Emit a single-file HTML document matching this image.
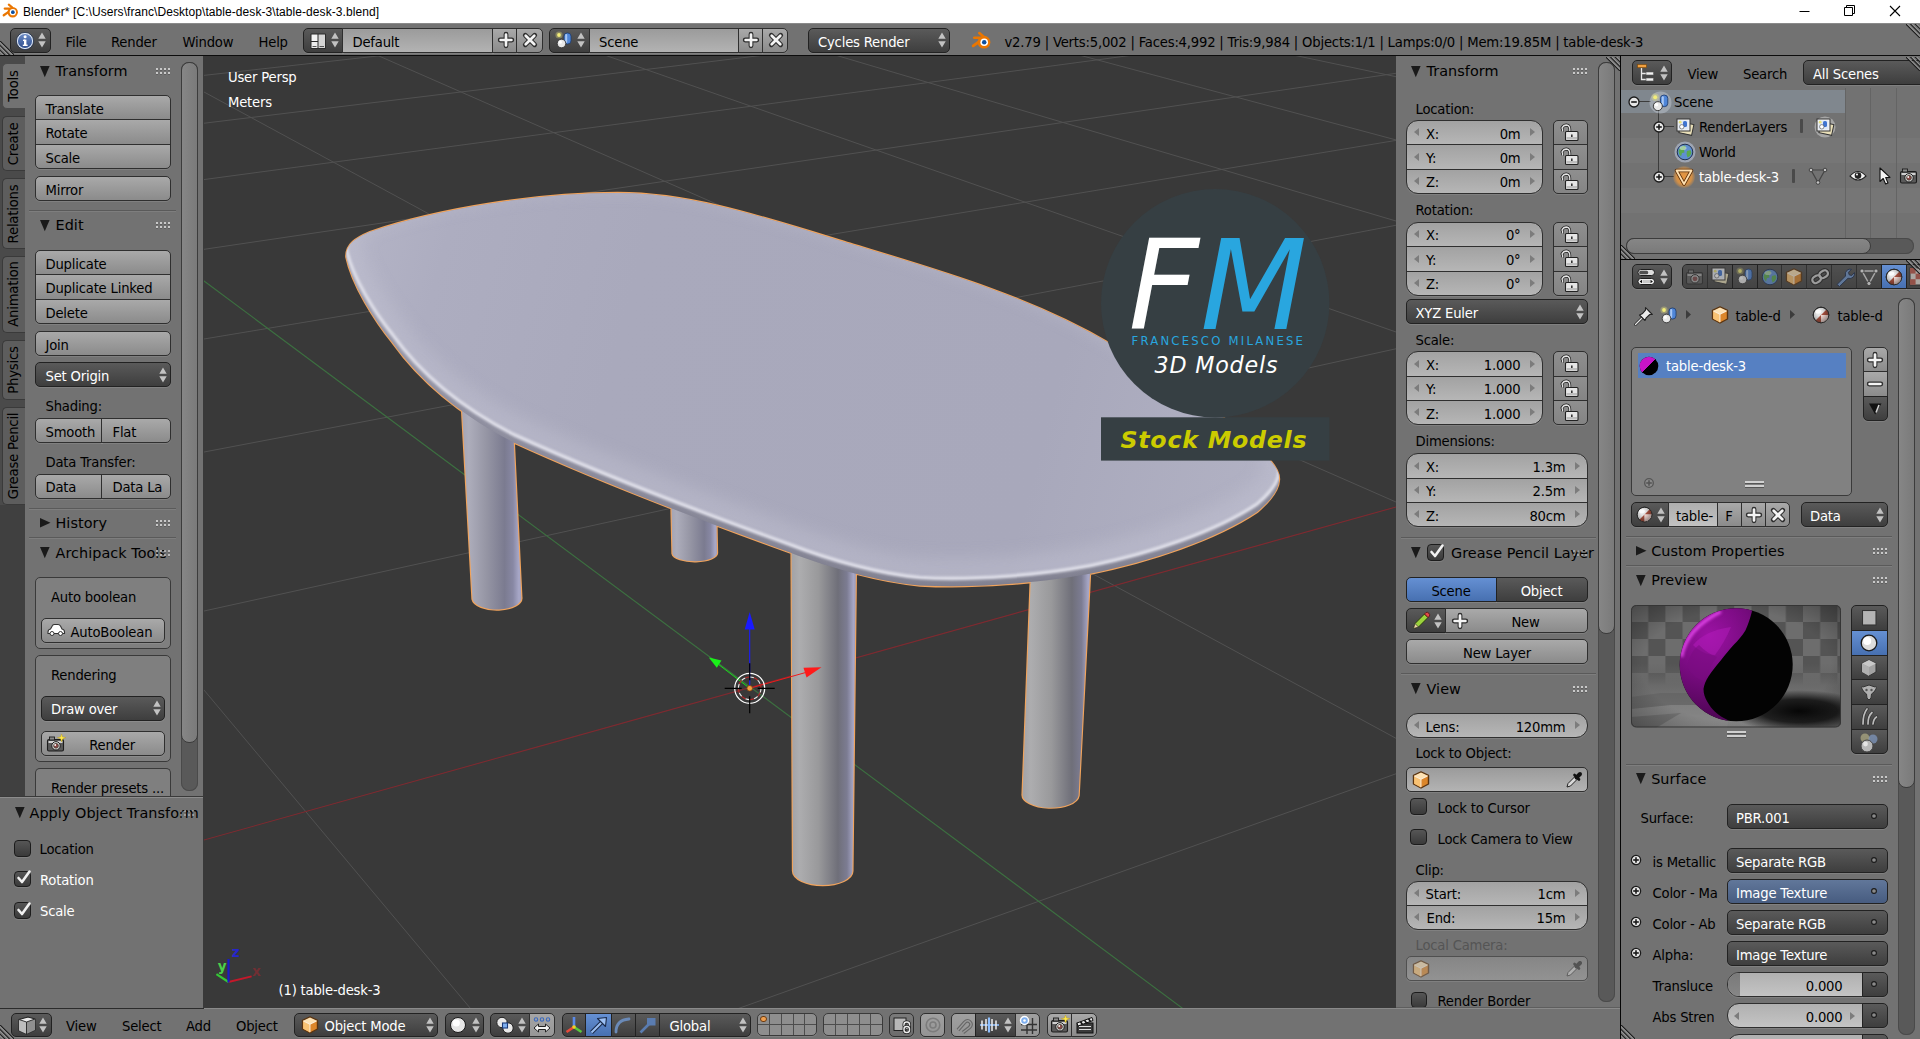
<!DOCTYPE html>
<html><head><meta charset="utf-8"><title>Blender</title><style>
html,body{margin:0;padding:0}
html{overflow:hidden;width:1920px;height:1039px;background:#727272}
body{width:1920px;height:1039px;position:relative;overflow:hidden;background:#727272;
 font-family:"DejaVu Sans","Liberation Sans",sans-serif;font-size:13.2px;color:#000}
.a{position:absolute;box-sizing:border-box}
.t{position:absolute;white-space:nowrap;letter-spacing:-0.2px}
.tool{background:linear-gradient(#a9a9a9,#8b8b8b);border:1px solid #2f2f2f;box-shadow:0 1px 0 rgba(255,255,255,.10)}
.menu{background:linear-gradient(#5a5a5a,#3e3e3e);border:1px solid #222;box-shadow:0 1px 0 rgba(255,255,255,.10)}
.menub{background:linear-gradient(#61779a,#475c80);border:1px solid #222;box-shadow:0 1px 0 rgba(255,255,255,.10)}
.num{background:linear-gradient(#a2a2a2,#b6b6b6);border:1px solid #2f2f2f;box-shadow:0 1px 0 rgba(255,255,255,.10)}
.txt{background:linear-gradient(#9b9b9b,#b3b3b3);border:1px solid #2f2f2f;box-shadow:0 1px 0 rgba(255,255,255,.10)}
.sel{background:linear-gradient(#6590d3,#4770b1);border:1px solid #222;box-shadow:0 1px 0 rgba(255,255,255,.10)}
.chk{background:linear-gradient(#565656,#3a3a3a);border:1px solid #1c1c1c;border-radius:4px;box-shadow:0 1px 0 rgba(255,255,255,.10)}
.bx{background:#7f7f7f;border:1px solid #3a3a3a;border-radius:5px}
.sbt{background:#595959;border-radius:8px;box-shadow:inset 0 0 0 1px #4a4a4a}
.sbh{background:linear-gradient(90deg,#868686,#7a7a7a);border:1px solid #3c3c3c;border-radius:8px}
.sbv{background:linear-gradient(#868686,#7a7a7a);border:1px solid #3c3c3c;border-radius:8px}
</style></head>
<body>
<div class="a " style="left:0px;top:0px;width:1920px;height:23px;background:#fff;"></div>
<svg class="a" style="left:1.5px;top:3px;" width="16.56" height="15.18" viewBox="0 0 16.56 15.18"><g transform="scale(0.92)"><g stroke="#ea7600" stroke-linecap="round" fill="none"><path d="M11 4.8 L7.4 1.8" stroke-width="2.3"/><path d="M9.5 6.1 H2.9" stroke-width="2.3"/><path d="M7.2 9.6 L1.9 13.3" stroke-width="2.5"/></g><circle cx="11.6" cy="10" r="5.7" fill="#ea7600"/><circle cx="11.8" cy="10" r="3.4" fill="#fff"/><circle cx="11.8" cy="10" r="2" fill="#0d4f9e"/></g></svg>
<span class="t" style="left:23px;top:6.45px;font-size:12px;line-height:12px;color:#000;font-family:'Liberation Sans',sans-serif;letter-spacing:0.07px;">Blender* [C:\Users\franc\Desktop\table-desk-3\table-desk-3.blend]</span>
<svg class="a" style="left:1780px;top:0px;" width="140" height="23" viewBox="0 0 140 23"><path d="M19.5 11.5 H29.5" stroke="#000" stroke-width="1" fill="none"/><path d="M64.5 7.5 H72.5 V15.5 H64.5Z M66.5 7.5 V5.5 H74.5 V13.5 H72.5" stroke="#000" stroke-width="1" fill="none"/><path d="M110 6 L120 16 M120 6 L110 16" stroke="#000" stroke-width="1.1" fill="none"/></svg>
<div class="a " style="left:0px;top:56px;width:203px;height:741px;background:#727272;"></div>
<div class="a " style="left:0px;top:56px;width:25px;height:741px;background:#4a4a4a;"></div>
<div class="a " style="left:0px;top:505px;width:25px;height:292px;background:#404040;"></div>
<div class="a " style="left:2px;top:63px;width:23px;height:46px;background:#727272;border:1px solid #4a4a4a;border-right:none;border-radius:5px 0 0 5px;"></div>
<span class="t" style="left:-86px;top:79px;width:200px;text-align:center;font-size:13.2px;line-height:14px;transform:rotate(-90deg);color:#000;">Tools</span>
<div class="a " style="left:2px;top:116px;width:23px;height:55px;background:#5d5d5d;border:1px solid #3a3a3a;border-right:none;border-radius:5px 0 0 5px;"></div>
<span class="t" style="left:-86px;top:136.5px;width:200px;text-align:center;font-size:13.2px;line-height:14px;transform:rotate(-90deg);color:#000;">Create</span>
<div class="a " style="left:2px;top:178px;width:23px;height:71px;background:#5d5d5d;border:1px solid #3a3a3a;border-right:none;border-radius:5px 0 0 5px;"></div>
<span class="t" style="left:-86px;top:206.5px;width:200px;text-align:center;font-size:13.2px;line-height:14px;transform:rotate(-90deg);color:#000;">Relations</span>
<div class="a " style="left:2px;top:256px;width:23px;height:77px;background:#5d5d5d;border:1px solid #3a3a3a;border-right:none;border-radius:5px 0 0 5px;"></div>
<span class="t" style="left:-86px;top:287.25px;width:200px;text-align:center;font-size:13.2px;line-height:14px;transform:rotate(-90deg);color:#000;">Animation</span>
<div class="a " style="left:2px;top:340px;width:23px;height:60px;background:#5d5d5d;border:1px solid #3a3a3a;border-right:none;border-radius:5px 0 0 5px;"></div>
<span class="t" style="left:-86px;top:363px;width:200px;text-align:center;font-size:13.2px;line-height:14px;transform:rotate(-90deg);color:#000;">Physics</span>
<div class="a " style="left:2px;top:407px;width:23px;height:98px;background:#5d5d5d;border:1px solid #3a3a3a;border-right:none;border-radius:5px 0 0 5px;"></div>
<span class="t" style="left:-86px;top:449.25px;width:200px;text-align:center;font-size:13.2px;line-height:14px;transform:rotate(-90deg);color:#000;">Grease Pencil</span>
<div class="a sbt" style="left:181px;top:62px;width:17px;height:729px;"></div>
<div class="a sbh" style="left:181px;top:62px;width:17px;height:681px;"></div>
<svg class="a" style="left:40px;top:65.5px;" width="10" height="12" viewBox="0 0 10 12"><path d="M0 0 L9.6 0 L4.8 11.3Z" fill="#1a1a1a"/></svg>
<span class="t" style="left:55.5px;top:64.42px;font-size:14.4px;line-height:14.4px;color:#000;letter-spacing:.05px;">Transform</span>
<svg class="a" style="left:155.5px;top:68px;" width="15" height="7" viewBox="0 0 15 7"><rect x="0" y="0" width="2" height="2" fill="#c9c9c9"/><rect x="0" y="2" width="2" height="1" fill="#4a4a4a" opacity=".5"/><rect x="0" y="4" width="2" height="2" fill="#c9c9c9"/><rect x="0" y="6" width="2" height="1" fill="#4a4a4a" opacity=".5"/><rect x="4" y="0" width="2" height="2" fill="#c9c9c9"/><rect x="4" y="2" width="2" height="1" fill="#4a4a4a" opacity=".5"/><rect x="4" y="4" width="2" height="2" fill="#c9c9c9"/><rect x="4" y="6" width="2" height="1" fill="#4a4a4a" opacity=".5"/><rect x="8" y="0" width="2" height="2" fill="#c9c9c9"/><rect x="8" y="2" width="2" height="1" fill="#4a4a4a" opacity=".5"/><rect x="8" y="4" width="2" height="2" fill="#c9c9c9"/><rect x="8" y="6" width="2" height="1" fill="#4a4a4a" opacity=".5"/><rect x="12" y="0" width="2" height="2" fill="#c9c9c9"/><rect x="12" y="2" width="2" height="1" fill="#4a4a4a" opacity=".5"/><rect x="12" y="4" width="2" height="2" fill="#c9c9c9"/><rect x="12" y="6" width="2" height="1" fill="#4a4a4a" opacity=".5"/></svg>
<div class="a tool" style="left:35px;top:95px;width:136px;height:25px;border-radius:5px 5px 0 0;"></div>
<span class="t" style="left:45.5px;top:102.88px;font-size:13.2px;line-height:13.2px;color:#000;">Translate</span>
<div class="a tool" style="left:35px;top:119px;width:136px;height:26px;border-radius:0;"></div>
<span class="t" style="left:45.5px;top:127.13px;font-size:13.2px;line-height:13.2px;color:#000;">Rotate</span>
<div class="a tool" style="left:35px;top:144px;width:136px;height:25px;border-radius:0 0 5px 5px;"></div>
<span class="t" style="left:45.5px;top:151.63px;font-size:13.2px;line-height:13.2px;color:#000;">Scale</span>
<div class="a tool" style="left:35px;top:176px;width:136px;height:25px;border-radius:5px;"></div>
<span class="t" style="left:45.5px;top:183.88px;font-size:13.2px;line-height:13.2px;color:#000;">Mirror</span>
<div class="a " style="left:29px;top:210px;width:147px;height:1px;background:#5a5a5a;box-shadow:0 1px 0 #7e7e7e;"></div>
<svg class="a" style="left:40px;top:219.5px;" width="10" height="12" viewBox="0 0 10 12"><path d="M0 0 L9.6 0 L4.8 11.3Z" fill="#1a1a1a"/></svg>
<span class="t" style="left:55.5px;top:218.42px;font-size:14.4px;line-height:14.4px;color:#000;letter-spacing:.05px;">Edit</span>
<svg class="a" style="left:155.5px;top:222px;" width="15" height="7" viewBox="0 0 15 7"><rect x="0" y="0" width="2" height="2" fill="#c9c9c9"/><rect x="0" y="2" width="2" height="1" fill="#4a4a4a" opacity=".5"/><rect x="0" y="4" width="2" height="2" fill="#c9c9c9"/><rect x="0" y="6" width="2" height="1" fill="#4a4a4a" opacity=".5"/><rect x="4" y="0" width="2" height="2" fill="#c9c9c9"/><rect x="4" y="2" width="2" height="1" fill="#4a4a4a" opacity=".5"/><rect x="4" y="4" width="2" height="2" fill="#c9c9c9"/><rect x="4" y="6" width="2" height="1" fill="#4a4a4a" opacity=".5"/><rect x="8" y="0" width="2" height="2" fill="#c9c9c9"/><rect x="8" y="2" width="2" height="1" fill="#4a4a4a" opacity=".5"/><rect x="8" y="4" width="2" height="2" fill="#c9c9c9"/><rect x="8" y="6" width="2" height="1" fill="#4a4a4a" opacity=".5"/><rect x="12" y="0" width="2" height="2" fill="#c9c9c9"/><rect x="12" y="2" width="2" height="1" fill="#4a4a4a" opacity=".5"/><rect x="12" y="4" width="2" height="2" fill="#c9c9c9"/><rect x="12" y="6" width="2" height="1" fill="#4a4a4a" opacity=".5"/></svg>
<div class="a tool" style="left:35px;top:250px;width:136px;height:25px;border-radius:5px 5px 0 0;"></div>
<span class="t" style="left:45.5px;top:257.88px;font-size:13.2px;line-height:13.2px;color:#000;">Duplicate</span>
<div class="a tool" style="left:35px;top:274px;width:136px;height:26px;border-radius:0;"></div>
<span class="t" style="left:45.5px;top:282.13px;font-size:13.2px;line-height:13.2px;color:#000;">Duplicate Linked</span>
<div class="a tool" style="left:35px;top:299px;width:136px;height:25px;border-radius:0 0 5px 5px;"></div>
<span class="t" style="left:45.5px;top:306.63px;font-size:13.2px;line-height:13.2px;color:#000;">Delete</span>
<div class="a tool" style="left:35px;top:331px;width:136px;height:25px;border-radius:5px;"></div>
<span class="t" style="left:45.5px;top:338.63px;font-size:13.2px;line-height:13.2px;color:#000;">Join</span>
<div class="a menu" style="left:35px;top:362px;width:136px;height:25px;border-radius:5px;"></div>
<span class="t" style="left:45.5px;top:369.88px;font-size:13.2px;line-height:13.2px;color:#fff;">Set Origin</span>
<svg class="a" style="left:159px;top:366.7px;" width="8" height="16" viewBox="0 0 8 16"><path d="M4 .6 L7.7 6.8 L.3 6.8Z M4 15.4 L7.7 9.2 L.3 9.2Z" fill="#c2c2c2"/></svg>
<span class="t" style="left:45.5px;top:400.43px;font-size:13.2px;line-height:13.2px;color:#000;">Shading:</span>
<div class="a tool" style="left:35px;top:418px;width:68px;height:25px;border-radius:5px 0 0 5px;"></div>
<span class="t" style="left:45.5px;top:425.88px;font-size:13.2px;line-height:13.2px;color:#000;">Smooth</span>
<div class="a tool" style="left:101px;top:418px;width:70px;height:25px;border-radius:0 5px 5px 0;"></div>
<span class="t" style="left:112.5px;top:425.88px;font-size:13.2px;line-height:13.2px;color:#000;">Flat</span>
<span class="t" style="left:45.5px;top:456.43px;font-size:13.2px;line-height:13.2px;color:#000;">Data Transfer:</span>
<div class="a tool" style="left:35px;top:474px;width:68px;height:25px;border-radius:5px 0 0 5px;"></div>
<span class="t" style="left:45.5px;top:481.38px;font-size:13.2px;line-height:13.2px;color:#000;">Data</span>
<div class="a tool" style="left:101px;top:474px;width:70px;height:25px;border-radius:0 5px 5px 0;"></div>
<span class="t" style="left:112.5px;top:481.38px;font-size:13.2px;line-height:13.2px;color:#000;">Data La</span>
<div class="a " style="left:29px;top:508px;width:147px;height:1px;background:#5a5a5a;box-shadow:0 1px 0 #7e7e7e;"></div>
<svg class="a" style="left:40px;top:517.8px;" width="11" height="10" viewBox="0 0 11 10"><path d="M0 0 L10.5 4.7 L0 9.4Z" fill="#1a1a1a"/></svg>
<span class="t" style="left:55.5px;top:516.42px;font-size:14.4px;line-height:14.4px;color:#000;letter-spacing:.05px;">History</span>
<svg class="a" style="left:155.5px;top:520px;" width="15" height="7" viewBox="0 0 15 7"><rect x="0" y="0" width="2" height="2" fill="#c9c9c9"/><rect x="0" y="2" width="2" height="1" fill="#4a4a4a" opacity=".5"/><rect x="0" y="4" width="2" height="2" fill="#c9c9c9"/><rect x="0" y="6" width="2" height="1" fill="#4a4a4a" opacity=".5"/><rect x="4" y="0" width="2" height="2" fill="#c9c9c9"/><rect x="4" y="2" width="2" height="1" fill="#4a4a4a" opacity=".5"/><rect x="4" y="4" width="2" height="2" fill="#c9c9c9"/><rect x="4" y="6" width="2" height="1" fill="#4a4a4a" opacity=".5"/><rect x="8" y="0" width="2" height="2" fill="#c9c9c9"/><rect x="8" y="2" width="2" height="1" fill="#4a4a4a" opacity=".5"/><rect x="8" y="4" width="2" height="2" fill="#c9c9c9"/><rect x="8" y="6" width="2" height="1" fill="#4a4a4a" opacity=".5"/><rect x="12" y="0" width="2" height="2" fill="#c9c9c9"/><rect x="12" y="2" width="2" height="1" fill="#4a4a4a" opacity=".5"/><rect x="12" y="4" width="2" height="2" fill="#c9c9c9"/><rect x="12" y="6" width="2" height="1" fill="#4a4a4a" opacity=".5"/></svg>
<div class="a " style="left:29px;top:537px;width:147px;height:1px;background:#5a5a5a;box-shadow:0 1px 0 #7e7e7e;"></div>
<svg class="a" style="left:40px;top:547px;" width="10" height="12" viewBox="0 0 10 12"><path d="M0 0 L9.6 0 L4.8 11.3Z" fill="#1a1a1a"/></svg>
<span class="t" style="left:55.5px;top:545.92px;font-size:14.4px;line-height:14.4px;color:#000;letter-spacing:.05px;">Archipack Tools</span>
<div class="a " style="left:166px;top:545px;width:12px;height:18px;background:#727272;"></div>
<svg class="a" style="left:155.5px;top:549.5px;opacity:0.8" width="15" height="7" viewBox="0 0 15 7"><rect x="0" y="0" width="2" height="2" fill="#c9c9c9"/><rect x="0" y="2" width="2" height="1" fill="#4a4a4a" opacity=".5"/><rect x="0" y="4" width="2" height="2" fill="#c9c9c9"/><rect x="0" y="6" width="2" height="1" fill="#4a4a4a" opacity=".5"/><rect x="4" y="0" width="2" height="2" fill="#c9c9c9"/><rect x="4" y="2" width="2" height="1" fill="#4a4a4a" opacity=".5"/><rect x="4" y="4" width="2" height="2" fill="#c9c9c9"/><rect x="4" y="6" width="2" height="1" fill="#4a4a4a" opacity=".5"/><rect x="8" y="0" width="2" height="2" fill="#c9c9c9"/><rect x="8" y="2" width="2" height="1" fill="#4a4a4a" opacity=".5"/><rect x="8" y="4" width="2" height="2" fill="#c9c9c9"/><rect x="8" y="6" width="2" height="1" fill="#4a4a4a" opacity=".5"/><rect x="12" y="0" width="2" height="2" fill="#c9c9c9"/><rect x="12" y="2" width="2" height="1" fill="#4a4a4a" opacity=".5"/><rect x="12" y="4" width="2" height="2" fill="#c9c9c9"/><rect x="12" y="6" width="2" height="1" fill="#4a4a4a" opacity=".5"/></svg>
<div class="a bx" style="left:35px;top:577px;width:136px;height:72px;"></div>
<span class="t" style="left:51px;top:591.13px;font-size:13.2px;line-height:13.2px;color:#000;">Auto boolean</span>
<div class="a tool" style="left:41px;top:618px;width:124px;height:25px;border-radius:5px;"></div>
<span class="t" style="left:70.5px;top:625.73px;font-size:13.2px;line-height:13.2px;color:#000;">AutoBoolean</span>
<svg class="a" style="left:46px;top:622px;" width="20" height="16" viewBox="0 0 20 16"><path d="M2 10 Q2 7.5 4.5 7 L6.5 3.5 Q7 2.5 8.5 2.5 L12 2.5 Q13.5 2.5 14.5 4 L16 7 Q18.5 7.5 18.5 10 L18.5 11.5 L2 11.5Z" fill="#fff" stroke="#333" stroke-width="1.1"/><circle cx="6" cy="11.5" r="2" fill="#fff" stroke="#333" stroke-width="1"/><circle cx="14.5" cy="11.5" r="2" fill="#fff" stroke="#333" stroke-width="1"/></svg>
<div class="a bx" style="left:35px;top:655px;width:136px;height:107px;"></div>
<span class="t" style="left:51px;top:669.43px;font-size:13.2px;line-height:13.2px;color:#000;">Rendering</span>
<div class="a menu" style="left:41px;top:696px;width:124px;height:25px;border-radius:5px;"></div>
<span class="t" style="left:51px;top:703.38px;font-size:13.2px;line-height:13.2px;color:#fff;">Draw over</span>
<svg class="a" style="left:153px;top:700.2px;" width="8" height="16" viewBox="0 0 8 16"><path d="M4 .6 L7.7 6.8 L.3 6.8Z M4 15.4 L7.7 9.2 L.3 9.2Z" fill="#c2c2c2"/></svg>
<div class="a tool" style="left:41px;top:731px;width:124px;height:25px;border-radius:5px;"></div>
<span class="t" style="left:-88px;width:400px;text-align:center;top:738.73px;font-size:13.2px;line-height:13.2px;color:#000;">Render</span>
<svg class="a" style="left:46px;top:733.5px;" width="20" height="19" viewBox="0 0 20 19"><rect x="1.5" y="5.5" width="16" height="11.5" rx="1.5" fill="#5a5a5a" stroke="#1c1c1c" stroke-width="1.1"/><rect x="3.5" y="3" width="5" height="3" fill="#8a8a8a" stroke="#1c1c1c" stroke-width=".9"/><rect x="2.5" y="7" width="14" height="2" fill="#d0d0d0"/><circle cx="10" cy="11.8" r="4.2" fill="#d8d8d8" stroke="#1c1c1c" stroke-width="1"/><circle cx="10" cy="11.8" r="2.4" fill="#8c4a4a" stroke="#332" stroke-width=".7"/><circle cx="9.2" cy="11" r=".9" fill="#fff"/><path d="M15.5 0 L16.6 3 L19.8 3.6 L16.8 4.8 L15.6 8 L14.6 4.8 L11.4 3.7 L14.5 3Z" fill="#ffe94a" stroke="#b89a10" stroke-width=".4"/></svg>
<div class="a bx" style="left:35px;top:768px;width:136px;height:29px;border-radius:5px 5px 0 0;border-bottom:none;"></div>
<span class="t" style="left:51px;top:781.93px;font-size:13.2px;line-height:13.2px;color:#000;">Render presets ...</span>
<div class="a " style="left:0px;top:797px;width:203px;height:212px;background:#727272;border-top:1px solid #8c8c8c;"></div>
<div class="a " style="left:0px;top:796px;width:203px;height:1px;background:#3a3a3a;"></div>
<svg class="a" style="left:14.5px;top:807px;" width="10" height="12" viewBox="0 0 10 12"><path d="M0 0 L9.6 0 L4.8 11.3Z" fill="#1a1a1a"/></svg>
<span class="t" style="left:29.5px;top:805.92px;font-size:14.4px;line-height:14.4px;color:#000;letter-spacing:.05px;">Apply Object Transform</span>
<svg class="a" style="left:179.5px;top:809.5px;opacity:0.5" width="15" height="7" viewBox="0 0 15 7"><rect x="0" y="0" width="2" height="2" fill="#c9c9c9"/><rect x="0" y="2" width="2" height="1" fill="#4a4a4a" opacity=".5"/><rect x="0" y="4" width="2" height="2" fill="#c9c9c9"/><rect x="0" y="6" width="2" height="1" fill="#4a4a4a" opacity=".5"/><rect x="4" y="0" width="2" height="2" fill="#c9c9c9"/><rect x="4" y="2" width="2" height="1" fill="#4a4a4a" opacity=".5"/><rect x="4" y="4" width="2" height="2" fill="#c9c9c9"/><rect x="4" y="6" width="2" height="1" fill="#4a4a4a" opacity=".5"/><rect x="8" y="0" width="2" height="2" fill="#c9c9c9"/><rect x="8" y="2" width="2" height="1" fill="#4a4a4a" opacity=".5"/><rect x="8" y="4" width="2" height="2" fill="#c9c9c9"/><rect x="8" y="6" width="2" height="1" fill="#4a4a4a" opacity=".5"/><rect x="12" y="0" width="2" height="2" fill="#c9c9c9"/><rect x="12" y="2" width="2" height="1" fill="#4a4a4a" opacity=".5"/><rect x="12" y="4" width="2" height="2" fill="#c9c9c9"/><rect x="12" y="6" width="2" height="1" fill="#4a4a4a" opacity=".5"/></svg>
<div class="a chk" style="left:14px;top:840px;width:17px;height:17px;"></div>
<span class="t" style="left:39.5px;top:843.43px;font-size:13.2px;line-height:13.2px;color:#000;">Location</span>
<div class="a chk" style="left:14px;top:871px;width:17px;height:16px;"></div>
<svg class="a" style="left:14px;top:867px;" width="20" height="20" viewBox="0 0 20 20"><path d="M4.5 11 L8 15 L15.5 4.5" stroke="#f2f2f2" stroke-width="2.6" fill="none" stroke-linecap="round" stroke-linejoin="round"/></svg>
<span class="t" style="left:40px;top:874.43px;font-size:13.2px;line-height:13.2px;color:#fff;">Rotation</span>
<div class="a chk" style="left:14px;top:902px;width:17px;height:17px;"></div>
<svg class="a" style="left:14px;top:898.5px;" width="20" height="20" viewBox="0 0 20 20"><path d="M4.5 11 L8 15 L15.5 4.5" stroke="#f2f2f2" stroke-width="2.6" fill="none" stroke-linecap="round" stroke-linejoin="round"/></svg>
<span class="t" style="left:40px;top:905.43px;font-size:13.2px;line-height:13.2px;color:#fff;">Scale</span>
<div class="a " style="left:203px;top:56px;width:2px;height:952px;background:#393939;"></div>
<svg class="a" style="left:204px;top:56px" width="1192" height="952" viewBox="204 56 1192 952"><defs><clipPath id="vc"><rect x="204" y="56" width="1192" height="952"/></clipPath><clipPath id="tc"><path d="M346.3 257 C346 244 356 238 370 232 C440 208 540 193 617.5 193 C690 193 760 216 850 243.7 C930 268 1030 296 1110 343.7 C1170 378 1236 421 1270.5 461 C1276 467.5 1279.5 473 1279 480 C1278.5 491 1270 501 1257 512 C1216 539.5 1150 561.5 1091 573.5 C1040 583 975 588.5 920 585.5 C880 582 830 568 790 552.5 C700 520 600 482 513.7 442.5 C470 420 425 388 392.5 342.5 C375 321 352 285 346.3 257Z"/></clipPath><filter id="b2" x="-5%" y="-5%" width="110%" height="110%"><feGaussianBlur stdDeviation="1.3"/></filter><filter id="b8" x="-5%" y="-10%" width="110%" height="120%"><feGaussianBlur stdDeviation="9"/></filter><linearGradient id="lg" x1="0" x2="1" y1="0" y2="0"><stop offset="0" stop-color="#a2a2a6"/><stop offset=".12" stop-color="#adadaf"/><stop offset=".42" stop-color="#99999b"/><stop offset=".72" stop-color="#6f6f79"/><stop offset=".86" stop-color="#7c7c92"/><stop offset=".96" stop-color="#a6a6c6"/><stop offset="1" stop-color="#9c9cb8"/></linearGradient><linearGradient id="lg2" x1="0" x2="1" y1="0" y2="0"><stop offset="0" stop-color="#a4a4b4"/><stop offset=".12" stop-color="#adadbb"/><stop offset=".42" stop-color="#9595a4"/><stop offset=".72" stop-color="#7b7b90"/><stop offset=".86" stop-color="#8888a4"/><stop offset=".96" stop-color="#a8a8c8"/><stop offset="1" stop-color="#9e9ebc"/></linearGradient><linearGradient id="rg" gradientUnits="userSpaceOnUse" x1="0" y1="250" x2="0" y2="590"><stop offset="0" stop-color="#9090a2"/><stop offset="1" stop-color="#727282"/></linearGradient><linearGradient id="tg" gradientUnits="userSpaceOnUse" x1="346" y1="250" x2="1278" y2="500"><stop offset="0" stop-color="#b4b4c6"/><stop offset=".1" stop-color="#adadc0"/><stop offset=".3" stop-color="#a9a9bc"/><stop offset=".75" stop-color="#a8a8bb"/><stop offset="1" stop-color="#b2b2c4"/></linearGradient></defs><g clip-path="url(#vc)"><rect x="204" y="56" width="1192" height="952" fill="#393939"/><path d="M150 81.4 L1450 -63.7 M150 129.8 L1450 -28.3 M150 186.8 L1450 12.6 M150 257.3 L1450 65.3 M150 348.0 L1450 131.4 M150 462.3 L1450 215.0 M150 622.9 L1450 336.9 M150 1218.5 L1450 754.5 M150 62.7 L1450 767.6 M150 -44.4 L1450 525.7 M150 -104.1 L1450 350.9 M150 -147.8 L1450 237.0 M150 -194.0 L1450 154.4 M150 -186.2 L1450 88.1 M150 625.5 L1450 2179.0" stroke="#515151" stroke-width="1" fill="none"/><path d="M150 855.1 L1450 491.9" stroke="#7e2a30" stroke-width="1.1"/><path d="M150 240.9 L1450 1207.1" stroke="#3c7040" stroke-width="1.1"/><path d="M461.5 400 L472.5 599 A24.4 11.5 0 0 0 521.3 597 L513.2 430Z M671.2 495 L672.5 553.5 A22.2 8.3 0 0 0 717 552.5 L716.2 512Z M791.5 540 L793 871 A29.7 14.0 0 0 0 852.4 871 L856 560Z M1031.5 560 L1022.6 794 A28.0 12.9 0 0 0 1078.6 795.6 L1091 555Z M346.3 257 C346 244 356 238 370 232 C440 208 540 193 617.5 193 C690 193 760 216 850 243.7 C930 268 1030 296 1110 343.7 C1170 378 1236 421 1270.5 461 C1276 467.5 1279.5 473 1279 480 C1278.5 491 1270 501 1257 512 C1216 539.5 1150 561.5 1091 573.5 C1040 583 975 588.5 920 585.5 C880 582 830 568 790 552.5 C700 520 600 482 513.7 442.5 C470 420 425 388 392.5 342.5 C375 321 352 285 346.3 257Z" fill="none" stroke="#f0a35c" stroke-width="2.3" stroke-linejoin="round"/><path d="M461.5 400 L472.5 599 A24.4 11.5 0 0 0 521.3 597 L513.2 430Z" fill="url(#lg2)"/><path d="M671.2 495 L672.5 553.5 A22.2 8.3 0 0 0 717 552.5 L716.2 512Z" fill="url(#lg2)"/><path d="M791.5 540 L793 871 A29.7 14.0 0 0 0 852.4 871 L856 560Z" fill="url(#lg)"/><path d="M1031.5 560 L1022.6 794 A28.0 12.9 0 0 0 1078.6 795.6 L1091 555Z" fill="url(#lg)"/><path d="M346.3 257 C346 244 356 238 370 232 C440 208 540 193 617.5 193 C690 193 760 216 850 243.7 C930 268 1030 296 1110 343.7 C1170 378 1236 421 1270.5 461 C1276 467.5 1279.5 473 1279 480 C1278.5 491 1270 501 1257 512 C1216 539.5 1150 561.5 1091 573.5 C1040 583 975 588.5 920 585.5 C880 582 830 568 790 552.5 C700 520 600 482 513.7 442.5 C470 420 425 388 392.5 342.5 C375 321 352 285 346.3 257Z" fill="url(#rg)"/><g clip-path="url(#tc)"><path d="M346.3 257 C346 244 356 238 370 232 C440 208 540 193 617.5 193 C690 193 760 216 850 243.7 C930 268 1030 296 1110 343.7 C1170 378 1236 421 1270.5 461 C1276 467.5 1279.5 473 1279 480 C1278.5 491 1270 501 1257 512 C1216 539.5 1150 561.5 1091 573.5 C1040 583 975 588.5 920 585.5 C880 582 830 568 790 552.5 C700 520 600 482 513.7 442.5 C470 420 425 388 392.5 342.5 C375 321 352 285 346.3 257Z" transform="translate(0,-7.5)" fill="url(#tg)"/><path d="M346.3 257 C346 244 356 238 370 232 C440 208 540 193 617.5 193 C690 193 760 216 850 243.7 C930 268 1030 296 1110 343.7 C1170 378 1236 421 1270.5 461 C1276 467.5 1279.5 473 1279 480 C1278.5 491 1270 501 1257 512 C1216 539.5 1150 561.5 1091 573.5 C1040 583 975 588.5 920 585.5 C880 582 830 568 790 552.5 C700 520 600 482 513.7 442.5 C470 420 425 388 392.5 342.5 C375 321 352 285 346.3 257Z" transform="translate(0,-15)" fill="none" stroke="#c6c6d6" stroke-width="24" filter="url(#b8)" opacity=".42"/><path d="M346.3 257 C346 244 356 238 370 232 C440 208 540 193 617.5 193 C690 193 760 216 850 243.7 C930 268 1030 296 1110 343.7 C1170 378 1236 421 1270.5 461 C1276 467.5 1279.5 473 1279 480 C1278.5 491 1270 501 1257 512 C1216 539.5 1150 561.5 1091 573.5 C1040 583 975 588.5 920 585.5 C880 582 830 568 790 552.5 C700 520 600 482 513.7 442.5 C470 420 425 388 392.5 342.5 C375 321 352 285 346.3 257Z" transform="translate(0,-8)" fill="none" stroke="#dcdce6" stroke-width="3.6" filter="url(#b2)"/></g><circle cx="1215.2" cy="303.3" r="114.2" fill="#363f43"/><rect x="1101" y="417.3" width="228.4" height="43.3" fill="#363f43"/><g font-family="DejaVu Sans, Liberation Sans, sans-serif"><text x="1128.5" y="329.2" font-size="124.5" font-style="oblique" fill="#fff" textLength="70.5" lengthAdjust="spacingAndGlyphs">F</text><text x="1200.3" y="329.2" font-size="124.5" font-style="oblique" fill="#29a6df" textLength="107" lengthAdjust="spacingAndGlyphs">M</text><text x="1131.5" y="345.3" font-size="11.7" fill="#29a6df" textLength="171.5" lengthAdjust="spacing">FRANCESCO MILANESE</text><text x="1154.5" y="372.5" font-size="22.2" font-style="oblique" fill="#fff" textLength="123" lengthAdjust="spacing">3D Models</text><text x="1120.5" y="447.9" font-size="23.7" font-style="oblique" font-weight="bold" fill="#cccc00" textLength="186" lengthAdjust="spacing">Stock Models</text></g><path d="M749.7 688.3 L749.7 629" stroke="#1a1aff" stroke-width="1.1"/><path d="M744.7 629.5 L749.7 612 L754.7 629.5Z" fill="#1a1aff"/><path d="M749.7 688.3 L805 672.7" stroke="#f01a1a" stroke-width="1"/><path d="M821.5 667.3 L803.5 667.8 L806.5 677.5Z" fill="#ff1a1a"/><path d="M749.7 688.3 L719 664.8" stroke="#1ae01a" stroke-width="1"/><path d="M708.8 657.4 L721.5 660.6 L716.8 667.8Z" fill="#1af01a"/><circle cx="749.7" cy="688.3" r="15" fill="none" stroke="#fff" stroke-width="1.2"/><circle cx="749.7" cy="688.3" r="11.3" fill="none" stroke="#fff" stroke-width="1.1" stroke-dasharray="4.4 4.4" opacity=".9"/><circle cx="749.7" cy="688.3" r="11.3" fill="none" stroke="#b82a2a" stroke-width="1.1" stroke-dasharray="4.4 4.4" stroke-dashoffset="4.4"/><path d="M724.7 688.3 H741.7 M757.7 688.3 H774.7 M749.7 663.3 V680.3 M749.7 696.3 V713.3" stroke="#000" stroke-width="1.2"/><circle cx="749.7" cy="688.3" r="2.8" fill="#f0a040" stroke="#7a3a10" stroke-width=".8"/><path d="M228.5 982 L251.6 976.4" stroke="#c4182a" stroke-width="2"/><path d="M228.5 982 L216.4 974.1" stroke="#34c834" stroke-width="2.2"/><path d="M228.5 982.5 L228.5 959" stroke="#1a1ac8" stroke-width="2.2"/><g font-family="DejaVu Sans, sans-serif" font-size="13.5" font-weight="bold"><text x="252.5" y="975.5" fill="#a02830" opacity=".55">x</text><text x="217.8" y="970.6" fill="#4ad04a">y</text><text x="231.8" y="957.3" fill="#2626cc">z</text></g></g></svg>
<span class="t" style="left:228px;top:71.43px;font-size:13.2px;line-height:13.2px;color:#fff;">User Persp</span>
<span class="t" style="left:228px;top:96.43px;font-size:13.2px;line-height:13.2px;color:#fff;">Meters</span>
<span class="t" style="left:278.5px;top:984.43px;font-size:13.2px;line-height:13.2px;color:#fff;">(1) table-desk-3</span>
<div class="a " style="left:1396px;top:56px;width:224px;height:952px;background:#727272;"></div>
<div class="a " style="left:1396px;top:1007px;width:224px;height:2px;background:#727272;"></div>
<div class="a sbt" style="left:1598px;top:62px;width:17px;height:940px;"></div>
<div class="a sbh" style="left:1598px;top:62px;width:17px;height:572px;"></div>
<svg class="a" style="left:1411px;top:65.5px;" width="10" height="12" viewBox="0 0 10 12"><path d="M0 0 L9.6 0 L4.8 11.3Z" fill="#1a1a1a"/></svg>
<span class="t" style="left:1426.5px;top:64.42px;font-size:14.4px;line-height:14.4px;color:#000;letter-spacing:.05px;">Transform</span>
<svg class="a" style="left:1572.5px;top:68px;" width="15" height="7" viewBox="0 0 15 7"><rect x="0" y="0" width="2" height="2" fill="#c9c9c9"/><rect x="0" y="2" width="2" height="1" fill="#4a4a4a" opacity=".5"/><rect x="0" y="4" width="2" height="2" fill="#c9c9c9"/><rect x="0" y="6" width="2" height="1" fill="#4a4a4a" opacity=".5"/><rect x="4" y="0" width="2" height="2" fill="#c9c9c9"/><rect x="4" y="2" width="2" height="1" fill="#4a4a4a" opacity=".5"/><rect x="4" y="4" width="2" height="2" fill="#c9c9c9"/><rect x="4" y="6" width="2" height="1" fill="#4a4a4a" opacity=".5"/><rect x="8" y="0" width="2" height="2" fill="#c9c9c9"/><rect x="8" y="2" width="2" height="1" fill="#4a4a4a" opacity=".5"/><rect x="8" y="4" width="2" height="2" fill="#c9c9c9"/><rect x="8" y="6" width="2" height="1" fill="#4a4a4a" opacity=".5"/><rect x="12" y="0" width="2" height="2" fill="#c9c9c9"/><rect x="12" y="2" width="2" height="1" fill="#4a4a4a" opacity=".5"/><rect x="12" y="4" width="2" height="2" fill="#c9c9c9"/><rect x="12" y="6" width="2" height="1" fill="#4a4a4a" opacity=".5"/></svg>
<svg class="a" style="left:1606px;top:57px;" width="14" height="14" viewBox="0 0 12 12"><path d="M3 -1 L13 9 M7 -1 L13 5 M-1 -1 L13 13" stroke="#1c1c1c" stroke-width="1.1"/><path d="M4.2 -1 L13 7.8 M.2 -1 L13 11.8 M8.2 -1 L13 3.8" stroke="#979797" stroke-width=".9"/></svg>
<span class="t" style="left:1415.5px;top:102.93px;font-size:13.2px;line-height:13.2px;color:#000;">Location:</span>
<div class="a num" style="left:1406px;top:120px;width:137px;height:25px;border-radius:12px 12px 0 0;"></div>
<span class="t" style="left:1426px;top:127.58px;font-size:13.2px;line-height:13.2px;color:#000;">X:</span>
<span class="t" style="left:1120.5px;width:400px;text-align:right;top:127.58px;font-size:13.2px;line-height:13.2px;color:#000;">0m</span>
<svg class="a" style="left:1413.5px;top:128.45px;" width="5" height="8" viewBox="0 0 5 8"><path d="M5 0 L5 8 L0 4Z" fill="#7c7c7c"/></svg>
<svg class="a" style="left:1530px;top:128.45px;" width="5" height="8" viewBox="0 0 5 8"><path d="M0 0 L0 8 L5 4Z" fill="#7c7c7c"/></svg>
<div class="a num" style="left:1406px;top:144px;width:137px;height:26px;border-radius:0;"></div>
<span class="t" style="left:1426px;top:151.83px;font-size:13.2px;line-height:13.2px;color:#000;">Y:</span>
<span class="t" style="left:1120.5px;width:400px;text-align:right;top:151.83px;font-size:13.2px;line-height:13.2px;color:#000;">0m</span>
<svg class="a" style="left:1413.5px;top:152.7px;" width="5" height="8" viewBox="0 0 5 8"><path d="M5 0 L5 8 L0 4Z" fill="#7c7c7c"/></svg>
<svg class="a" style="left:1530px;top:152.7px;" width="5" height="8" viewBox="0 0 5 8"><path d="M0 0 L0 8 L5 4Z" fill="#7c7c7c"/></svg>
<div class="a num" style="left:1406px;top:169px;width:137px;height:25px;border-radius:0 0 12px 12px;"></div>
<span class="t" style="left:1426px;top:176.33px;font-size:13.2px;line-height:13.2px;color:#000;">Z:</span>
<span class="t" style="left:1120.5px;width:400px;text-align:right;top:176.33px;font-size:13.2px;line-height:13.2px;color:#000;">0m</span>
<svg class="a" style="left:1413.5px;top:177.2px;" width="5" height="8" viewBox="0 0 5 8"><path d="M5 0 L5 8 L0 4Z" fill="#7c7c7c"/></svg>
<svg class="a" style="left:1530px;top:177.2px;" width="5" height="8" viewBox="0 0 5 8"><path d="M0 0 L0 8 L5 4Z" fill="#7c7c7c"/></svg>
<div class="a tool" style="left:1553px;top:120px;width:35px;height:25px;border-radius:5px 5px 0 0;background:linear-gradient(#8f8f8f,#848484);"></div>
<svg class="a" style="left:1559.5px;top:123px;" width="20" height="20" viewBox="0 0 20 20"><path d="M2.5 8.5 Q3 6.5 2 5 Q3.5 2 6.5 2 Q9.5 2.3 9.8 6 V8.5" fill="none" stroke="#222" stroke-width="2.8"/><path d="M2.5 8.5 Q3 6.5 2 5 Q3.5 2 6.5 2 Q9.5 2.3 9.8 6 V8.5" fill="none" stroke="#e4e4e4" stroke-width="1.3"/><rect x="5.5" y="8.5" width="12.5" height="9" rx="1" fill="#e6e6e6" stroke="#222" stroke-width="1.1"/><rect x="11" y="11.5" width="1.6" height="2.8" fill="#333"/><rect x="6.5" y="14" width="10.5" height="2.5" fill="#bdbdbd"/></svg>
<div class="a tool" style="left:1553px;top:144px;width:35px;height:26px;border-radius:0;background:linear-gradient(#8f8f8f,#848484);"></div>
<svg class="a" style="left:1559.5px;top:147px;" width="20" height="20" viewBox="0 0 20 20"><path d="M2.5 8.5 Q3 6.5 2 5 Q3.5 2 6.5 2 Q9.5 2.3 9.8 6 V8.5" fill="none" stroke="#222" stroke-width="2.8"/><path d="M2.5 8.5 Q3 6.5 2 5 Q3.5 2 6.5 2 Q9.5 2.3 9.8 6 V8.5" fill="none" stroke="#e4e4e4" stroke-width="1.3"/><rect x="5.5" y="8.5" width="12.5" height="9" rx="1" fill="#e6e6e6" stroke="#222" stroke-width="1.1"/><rect x="11" y="11.5" width="1.6" height="2.8" fill="#333"/><rect x="6.5" y="14" width="10.5" height="2.5" fill="#bdbdbd"/></svg>
<div class="a tool" style="left:1553px;top:169px;width:35px;height:25px;border-radius:0 0 5px 5px;background:linear-gradient(#8f8f8f,#848484);"></div>
<svg class="a" style="left:1559.5px;top:171.5px;" width="20" height="20" viewBox="0 0 20 20"><path d="M2.5 8.5 Q3 6.5 2 5 Q3.5 2 6.5 2 Q9.5 2.3 9.8 6 V8.5" fill="none" stroke="#222" stroke-width="2.8"/><path d="M2.5 8.5 Q3 6.5 2 5 Q3.5 2 6.5 2 Q9.5 2.3 9.8 6 V8.5" fill="none" stroke="#e4e4e4" stroke-width="1.3"/><rect x="5.5" y="8.5" width="12.5" height="9" rx="1" fill="#e6e6e6" stroke="#222" stroke-width="1.1"/><rect x="11" y="11.5" width="1.6" height="2.8" fill="#333"/><rect x="6.5" y="14" width="10.5" height="2.5" fill="#bdbdbd"/></svg>
<span class="t" style="left:1415.5px;top:204.43px;font-size:13.2px;line-height:13.2px;color:#000;">Rotation:</span>
<div class="a num" style="left:1406px;top:222px;width:137px;height:25px;border-radius:12px 12px 0 0;"></div>
<span class="t" style="left:1426px;top:229.33px;font-size:13.2px;line-height:13.2px;color:#000;">X:</span>
<span class="t" style="left:1120.5px;width:400px;text-align:right;top:229.33px;font-size:13.2px;line-height:13.2px;color:#000;">0°</span>
<svg class="a" style="left:1413.5px;top:230.2px;" width="5" height="8" viewBox="0 0 5 8"><path d="M5 0 L5 8 L0 4Z" fill="#7c7c7c"/></svg>
<svg class="a" style="left:1530px;top:230.2px;" width="5" height="8" viewBox="0 0 5 8"><path d="M0 0 L0 8 L5 4Z" fill="#7c7c7c"/></svg>
<div class="a num" style="left:1406px;top:246px;width:137px;height:26px;border-radius:0;"></div>
<span class="t" style="left:1426px;top:253.83px;font-size:13.2px;line-height:13.2px;color:#000;">Y:</span>
<span class="t" style="left:1120.5px;width:400px;text-align:right;top:253.83px;font-size:13.2px;line-height:13.2px;color:#000;">0°</span>
<svg class="a" style="left:1413.5px;top:254.7px;" width="5" height="8" viewBox="0 0 5 8"><path d="M5 0 L5 8 L0 4Z" fill="#7c7c7c"/></svg>
<svg class="a" style="left:1530px;top:254.7px;" width="5" height="8" viewBox="0 0 5 8"><path d="M0 0 L0 8 L5 4Z" fill="#7c7c7c"/></svg>
<div class="a num" style="left:1406px;top:271px;width:137px;height:25px;border-radius:0 0 12px 12px;"></div>
<span class="t" style="left:1426px;top:278.08px;font-size:13.2px;line-height:13.2px;color:#000;">Z:</span>
<span class="t" style="left:1120.5px;width:400px;text-align:right;top:278.08px;font-size:13.2px;line-height:13.2px;color:#000;">0°</span>
<svg class="a" style="left:1413.5px;top:278.95px;" width="5" height="8" viewBox="0 0 5 8"><path d="M5 0 L5 8 L0 4Z" fill="#7c7c7c"/></svg>
<svg class="a" style="left:1530px;top:278.95px;" width="5" height="8" viewBox="0 0 5 8"><path d="M0 0 L0 8 L5 4Z" fill="#7c7c7c"/></svg>
<div class="a tool" style="left:1553px;top:222px;width:35px;height:25px;border-radius:5px 5px 0 0;background:linear-gradient(#8f8f8f,#848484);"></div>
<svg class="a" style="left:1559.5px;top:224.5px;" width="20" height="20" viewBox="0 0 20 20"><path d="M2.5 8.5 Q3 6.5 2 5 Q3.5 2 6.5 2 Q9.5 2.3 9.8 6 V8.5" fill="none" stroke="#222" stroke-width="2.8"/><path d="M2.5 8.5 Q3 6.5 2 5 Q3.5 2 6.5 2 Q9.5 2.3 9.8 6 V8.5" fill="none" stroke="#e4e4e4" stroke-width="1.3"/><rect x="5.5" y="8.5" width="12.5" height="9" rx="1" fill="#e6e6e6" stroke="#222" stroke-width="1.1"/><rect x="11" y="11.5" width="1.6" height="2.8" fill="#333"/><rect x="6.5" y="14" width="10.5" height="2.5" fill="#bdbdbd"/></svg>
<div class="a tool" style="left:1553px;top:246px;width:35px;height:26px;border-radius:0;background:linear-gradient(#8f8f8f,#848484);"></div>
<svg class="a" style="left:1559.5px;top:249px;" width="20" height="20" viewBox="0 0 20 20"><path d="M2.5 8.5 Q3 6.5 2 5 Q3.5 2 6.5 2 Q9.5 2.3 9.8 6 V8.5" fill="none" stroke="#222" stroke-width="2.8"/><path d="M2.5 8.5 Q3 6.5 2 5 Q3.5 2 6.5 2 Q9.5 2.3 9.8 6 V8.5" fill="none" stroke="#e4e4e4" stroke-width="1.3"/><rect x="5.5" y="8.5" width="12.5" height="9" rx="1" fill="#e6e6e6" stroke="#222" stroke-width="1.1"/><rect x="11" y="11.5" width="1.6" height="2.8" fill="#333"/><rect x="6.5" y="14" width="10.5" height="2.5" fill="#bdbdbd"/></svg>
<div class="a tool" style="left:1553px;top:271px;width:35px;height:25px;border-radius:0 0 5px 5px;background:linear-gradient(#8f8f8f,#848484);"></div>
<svg class="a" style="left:1559.5px;top:273.5px;" width="20" height="20" viewBox="0 0 20 20"><path d="M2.5 8.5 Q3 6.5 2 5 Q3.5 2 6.5 2 Q9.5 2.3 9.8 6 V8.5" fill="none" stroke="#222" stroke-width="2.8"/><path d="M2.5 8.5 Q3 6.5 2 5 Q3.5 2 6.5 2 Q9.5 2.3 9.8 6 V8.5" fill="none" stroke="#e4e4e4" stroke-width="1.3"/><rect x="5.5" y="8.5" width="12.5" height="9" rx="1" fill="#e6e6e6" stroke="#222" stroke-width="1.1"/><rect x="11" y="11.5" width="1.6" height="2.8" fill="#333"/><rect x="6.5" y="14" width="10.5" height="2.5" fill="#bdbdbd"/></svg>
<div class="a menu" style="left:1406px;top:299px;width:182px;height:25px;border-radius:5px;"></div>
<span class="t" style="left:1415.5px;top:306.93px;font-size:13.2px;line-height:13.2px;color:#fff;">XYZ Euler</span>
<svg class="a" style="left:1575.5px;top:303.7px;" width="8" height="16" viewBox="0 0 8 16"><path d="M4 .6 L7.7 6.8 L.3 6.8Z M4 15.4 L7.7 9.2 L.3 9.2Z" fill="#c2c2c2"/></svg>
<span class="t" style="left:1415.5px;top:333.93px;font-size:13.2px;line-height:13.2px;color:#000;">Scale:</span>
<div class="a num" style="left:1406px;top:351px;width:137px;height:26px;border-radius:12px 12px 0 0;"></div>
<span class="t" style="left:1426px;top:358.83px;font-size:13.2px;line-height:13.2px;color:#000;">X:</span>
<span class="t" style="left:1120.5px;width:400px;text-align:right;top:358.83px;font-size:13.2px;line-height:13.2px;color:#000;">1.000</span>
<svg class="a" style="left:1413.5px;top:359.7px;" width="5" height="8" viewBox="0 0 5 8"><path d="M5 0 L5 8 L0 4Z" fill="#7c7c7c"/></svg>
<svg class="a" style="left:1530px;top:359.7px;" width="5" height="8" viewBox="0 0 5 8"><path d="M0 0 L0 8 L5 4Z" fill="#7c7c7c"/></svg>
<div class="a num" style="left:1406px;top:376px;width:137px;height:25px;border-radius:0;"></div>
<span class="t" style="left:1426px;top:383.33px;font-size:13.2px;line-height:13.2px;color:#000;">Y:</span>
<span class="t" style="left:1120.5px;width:400px;text-align:right;top:383.33px;font-size:13.2px;line-height:13.2px;color:#000;">1.000</span>
<svg class="a" style="left:1413.5px;top:384.2px;" width="5" height="8" viewBox="0 0 5 8"><path d="M5 0 L5 8 L0 4Z" fill="#7c7c7c"/></svg>
<svg class="a" style="left:1530px;top:384.2px;" width="5" height="8" viewBox="0 0 5 8"><path d="M0 0 L0 8 L5 4Z" fill="#7c7c7c"/></svg>
<div class="a num" style="left:1406px;top:400px;width:137px;height:25px;border-radius:0 0 12px 12px;"></div>
<span class="t" style="left:1426px;top:407.58px;font-size:13.2px;line-height:13.2px;color:#000;">Z:</span>
<span class="t" style="left:1120.5px;width:400px;text-align:right;top:407.58px;font-size:13.2px;line-height:13.2px;color:#000;">1.000</span>
<svg class="a" style="left:1413.5px;top:408.45px;" width="5" height="8" viewBox="0 0 5 8"><path d="M5 0 L5 8 L0 4Z" fill="#7c7c7c"/></svg>
<svg class="a" style="left:1530px;top:408.45px;" width="5" height="8" viewBox="0 0 5 8"><path d="M0 0 L0 8 L5 4Z" fill="#7c7c7c"/></svg>
<div class="a tool" style="left:1553px;top:351px;width:35px;height:26px;border-radius:5px 5px 0 0;background:linear-gradient(#8f8f8f,#848484);"></div>
<svg class="a" style="left:1559.5px;top:354px;" width="20" height="20" viewBox="0 0 20 20"><path d="M2.5 8.5 Q3 6.5 2 5 Q3.5 2 6.5 2 Q9.5 2.3 9.8 6 V8.5" fill="none" stroke="#222" stroke-width="2.8"/><path d="M2.5 8.5 Q3 6.5 2 5 Q3.5 2 6.5 2 Q9.5 2.3 9.8 6 V8.5" fill="none" stroke="#e4e4e4" stroke-width="1.3"/><rect x="5.5" y="8.5" width="12.5" height="9" rx="1" fill="#e6e6e6" stroke="#222" stroke-width="1.1"/><rect x="11" y="11.5" width="1.6" height="2.8" fill="#333"/><rect x="6.5" y="14" width="10.5" height="2.5" fill="#bdbdbd"/></svg>
<div class="a tool" style="left:1553px;top:376px;width:35px;height:25px;border-radius:0;background:linear-gradient(#8f8f8f,#848484);"></div>
<svg class="a" style="left:1559.5px;top:378.5px;" width="20" height="20" viewBox="0 0 20 20"><path d="M2.5 8.5 Q3 6.5 2 5 Q3.5 2 6.5 2 Q9.5 2.3 9.8 6 V8.5" fill="none" stroke="#222" stroke-width="2.8"/><path d="M2.5 8.5 Q3 6.5 2 5 Q3.5 2 6.5 2 Q9.5 2.3 9.8 6 V8.5" fill="none" stroke="#e4e4e4" stroke-width="1.3"/><rect x="5.5" y="8.5" width="12.5" height="9" rx="1" fill="#e6e6e6" stroke="#222" stroke-width="1.1"/><rect x="11" y="11.5" width="1.6" height="2.8" fill="#333"/><rect x="6.5" y="14" width="10.5" height="2.5" fill="#bdbdbd"/></svg>
<div class="a tool" style="left:1553px;top:400px;width:35px;height:25px;border-radius:0 0 5px 5px;background:linear-gradient(#8f8f8f,#848484);"></div>
<svg class="a" style="left:1559.5px;top:403px;" width="20" height="20" viewBox="0 0 20 20"><path d="M2.5 8.5 Q3 6.5 2 5 Q3.5 2 6.5 2 Q9.5 2.3 9.8 6 V8.5" fill="none" stroke="#222" stroke-width="2.8"/><path d="M2.5 8.5 Q3 6.5 2 5 Q3.5 2 6.5 2 Q9.5 2.3 9.8 6 V8.5" fill="none" stroke="#e4e4e4" stroke-width="1.3"/><rect x="5.5" y="8.5" width="12.5" height="9" rx="1" fill="#e6e6e6" stroke="#222" stroke-width="1.1"/><rect x="11" y="11.5" width="1.6" height="2.8" fill="#333"/><rect x="6.5" y="14" width="10.5" height="2.5" fill="#bdbdbd"/></svg>
<span class="t" style="left:1415.5px;top:435.43px;font-size:13.2px;line-height:13.2px;color:#000;">Dimensions:</span>
<div class="a num" style="left:1406px;top:453px;width:182px;height:26px;border-radius:12px 12px 0 0;"></div>
<span class="t" style="left:1426px;top:460.83px;font-size:13.2px;line-height:13.2px;color:#000;">X:</span>
<span class="t" style="left:1165.5px;width:400px;text-align:right;top:460.83px;font-size:13.2px;line-height:13.2px;color:#000;">1.3m</span>
<svg class="a" style="left:1413.5px;top:461.7px;" width="5" height="8" viewBox="0 0 5 8"><path d="M5 0 L5 8 L0 4Z" fill="#7c7c7c"/></svg>
<svg class="a" style="left:1575px;top:461.7px;" width="5" height="8" viewBox="0 0 5 8"><path d="M0 0 L0 8 L5 4Z" fill="#7c7c7c"/></svg>
<div class="a num" style="left:1406px;top:478px;width:182px;height:25px;border-radius:0;"></div>
<span class="t" style="left:1426px;top:485.33px;font-size:13.2px;line-height:13.2px;color:#000;">Y:</span>
<span class="t" style="left:1165.5px;width:400px;text-align:right;top:485.33px;font-size:13.2px;line-height:13.2px;color:#000;">2.5m</span>
<svg class="a" style="left:1413.5px;top:486.2px;" width="5" height="8" viewBox="0 0 5 8"><path d="M5 0 L5 8 L0 4Z" fill="#7c7c7c"/></svg>
<svg class="a" style="left:1575px;top:486.2px;" width="5" height="8" viewBox="0 0 5 8"><path d="M0 0 L0 8 L5 4Z" fill="#7c7c7c"/></svg>
<div class="a num" style="left:1406px;top:502px;width:182px;height:25px;border-radius:0 0 12px 12px;"></div>
<span class="t" style="left:1426px;top:509.58px;font-size:13.2px;line-height:13.2px;color:#000;">Z:</span>
<span class="t" style="left:1165.5px;width:400px;text-align:right;top:509.58px;font-size:13.2px;line-height:13.2px;color:#000;">80cm</span>
<svg class="a" style="left:1413.5px;top:510.45px;" width="5" height="8" viewBox="0 0 5 8"><path d="M5 0 L5 8 L0 4Z" fill="#7c7c7c"/></svg>
<svg class="a" style="left:1575px;top:510.45px;" width="5" height="8" viewBox="0 0 5 8"><path d="M0 0 L0 8 L5 4Z" fill="#7c7c7c"/></svg>
<div class="a " style="left:1401px;top:537px;width:195px;height:1px;background:#5a5a5a;box-shadow:0 1px 0 #7e7e7e;"></div>
<svg class="a" style="left:1411px;top:547px;" width="10" height="12" viewBox="0 0 10 12"><path d="M0 0 L9.6 0 L4.8 11.3Z" fill="#1a1a1a"/></svg>
<div class="a chk" style="left:1427px;top:544px;width:17px;height:17px;"></div>
<svg class="a" style="left:1427px;top:540.5px;" width="20" height="20" viewBox="0 0 20 20"><path d="M4.5 11 L8 15 L15.5 4.5" stroke="#f2f2f2" stroke-width="2.6" fill="none" stroke-linecap="round" stroke-linejoin="round"/></svg>
<span class="t" style="left:1451px;top:545.92px;font-size:14.4px;line-height:14.4px;color:#000;letter-spacing:.05px;">Grease Pencil Layer</span>
<svg class="a" style="left:1572.5px;top:549.5px;opacity:0.55" width="15" height="7" viewBox="0 0 15 7"><rect x="0" y="0" width="2" height="2" fill="#c9c9c9"/><rect x="0" y="2" width="2" height="1" fill="#4a4a4a" opacity=".5"/><rect x="0" y="4" width="2" height="2" fill="#c9c9c9"/><rect x="0" y="6" width="2" height="1" fill="#4a4a4a" opacity=".5"/><rect x="4" y="0" width="2" height="2" fill="#c9c9c9"/><rect x="4" y="2" width="2" height="1" fill="#4a4a4a" opacity=".5"/><rect x="4" y="4" width="2" height="2" fill="#c9c9c9"/><rect x="4" y="6" width="2" height="1" fill="#4a4a4a" opacity=".5"/><rect x="8" y="0" width="2" height="2" fill="#c9c9c9"/><rect x="8" y="2" width="2" height="1" fill="#4a4a4a" opacity=".5"/><rect x="8" y="4" width="2" height="2" fill="#c9c9c9"/><rect x="8" y="6" width="2" height="1" fill="#4a4a4a" opacity=".5"/><rect x="12" y="0" width="2" height="2" fill="#c9c9c9"/><rect x="12" y="2" width="2" height="1" fill="#4a4a4a" opacity=".5"/><rect x="12" y="4" width="2" height="2" fill="#c9c9c9"/><rect x="12" y="6" width="2" height="1" fill="#4a4a4a" opacity=".5"/></svg>
<div class="a sel" style="left:1406px;top:577px;width:91px;height:25px;border-radius:5px 0 0 5px;"></div>
<span class="t" style="left:1251px;width:400px;text-align:center;top:584.93px;font-size:13.2px;line-height:13.2px;color:#000;">Scene</span>
<div class="a menu" style="left:1496px;top:577px;width:92px;height:25px;border-radius:0 5px 5px 0;"></div>
<span class="t" style="left:1341.5px;width:400px;text-align:center;top:584.93px;font-size:13.2px;line-height:13.2px;color:#fff;">Object</span>
<div class="a menu" style="left:1406px;top:608px;width:40px;height:25px;border-radius:5px 0 0 5px;"></div>
<svg class="a" style="left:1411px;top:611px;" width="20" height="20" viewBox="0 0 20 20"><path d="M2.5 17.5 L4 12.5 L13.5 3 L17 6.5 L7.5 16Z" fill="#9bd23c" stroke="#2a3a10" stroke-width="1"/><path d="M13.5 3 L15 1.5 Q16.5 .8 17.8 2.2 Q19.2 3.5 18.5 5 L17 6.5Z" fill="#e04848" stroke="#501010" stroke-width=".8"/><path d="M2.5 17.5 L4 12.5 L7.5 16Z" fill="#f0d8a0" stroke="#333" stroke-width=".7"/></svg>
<svg class="a" style="left:1434px;top:612.7px;" width="8" height="16" viewBox="0 0 8 16"><path d="M4 .6 L7.7 6.8 L.3 6.8Z M4 15.4 L7.7 9.2 L.3 9.2Z" fill="#c2c2c2"/></svg>
<div class="a tool" style="left:1445px;top:608px;width:143px;height:25px;border-radius:0 5px 5px 0;"></div>
<svg class="a" style="left:1451px;top:611.5px;" width="18" height="18" viewBox="0 0 18 18"><path d="M9 3.2 V14.8 M3.2 9 H14.8" stroke="#2e2e2e" stroke-width="4.8" stroke-linecap="round"/><path d="M9 3.6 V14.4 M3.6 9 H14.4" stroke="#f4f4f4" stroke-width="2.7" stroke-linecap="round"/></svg>
<span class="t" style="left:1325.5px;width:400px;text-align:center;top:615.93px;font-size:13.2px;line-height:13.2px;color:#000;">New</span>
<div class="a tool" style="left:1406px;top:639px;width:182px;height:25px;border-radius:5px;"></div>
<span class="t" style="left:1297px;width:400px;text-align:center;top:646.93px;font-size:13.2px;line-height:13.2px;color:#000;">New Layer</span>
<div class="a " style="left:1401px;top:673px;width:195px;height:1px;background:#5a5a5a;box-shadow:0 1px 0 #7e7e7e;"></div>
<svg class="a" style="left:1411px;top:683.2px;" width="10" height="12" viewBox="0 0 10 12"><path d="M0 0 L9.6 0 L4.8 11.3Z" fill="#1a1a1a"/></svg>
<span class="t" style="left:1426.5px;top:682.12px;font-size:14.4px;line-height:14.4px;color:#000;letter-spacing:.05px;">View</span>
<svg class="a" style="left:1572.5px;top:685.7px;" width="15" height="7" viewBox="0 0 15 7"><rect x="0" y="0" width="2" height="2" fill="#c9c9c9"/><rect x="0" y="2" width="2" height="1" fill="#4a4a4a" opacity=".5"/><rect x="0" y="4" width="2" height="2" fill="#c9c9c9"/><rect x="0" y="6" width="2" height="1" fill="#4a4a4a" opacity=".5"/><rect x="4" y="0" width="2" height="2" fill="#c9c9c9"/><rect x="4" y="2" width="2" height="1" fill="#4a4a4a" opacity=".5"/><rect x="4" y="4" width="2" height="2" fill="#c9c9c9"/><rect x="4" y="6" width="2" height="1" fill="#4a4a4a" opacity=".5"/><rect x="8" y="0" width="2" height="2" fill="#c9c9c9"/><rect x="8" y="2" width="2" height="1" fill="#4a4a4a" opacity=".5"/><rect x="8" y="4" width="2" height="2" fill="#c9c9c9"/><rect x="8" y="6" width="2" height="1" fill="#4a4a4a" opacity=".5"/><rect x="12" y="0" width="2" height="2" fill="#c9c9c9"/><rect x="12" y="2" width="2" height="1" fill="#4a4a4a" opacity=".5"/><rect x="12" y="4" width="2" height="2" fill="#c9c9c9"/><rect x="12" y="6" width="2" height="1" fill="#4a4a4a" opacity=".5"/></svg>
<div class="a num" style="left:1406px;top:713px;width:182px;height:25px;border-radius:12px;"></div>
<span class="t" style="left:1425.5px;top:720.58px;font-size:13.2px;line-height:13.2px;color:#000;">Lens:</span>
<span class="t" style="left:1165.5px;width:400px;text-align:right;top:720.58px;font-size:13.2px;line-height:13.2px;color:#000;">120mm</span>
<svg class="a" style="left:1413.5px;top:721.45px;" width="5" height="8" viewBox="0 0 5 8"><path d="M5 0 L5 8 L0 4Z" fill="#7c7c7c"/></svg>
<svg class="a" style="left:1575px;top:721.45px;" width="5" height="8" viewBox="0 0 5 8"><path d="M0 0 L0 8 L5 4Z" fill="#7c7c7c"/></svg>
<span class="t" style="left:1415.5px;top:747.43px;font-size:13.2px;line-height:13.2px;color:#000;">Lock to Object:</span>
<div class="a txt" style="left:1406px;top:767px;width:182px;height:25px;border-radius:5px;"></div>
<svg class="a" style="left:1412px;top:770.5px;opacity:1.0" width="18" height="18" viewBox="0 0 18 18"><path d="M9 1 L16.5 4.5 L16.5 13 L9 17 L1.5 13 L1.5 4.5Z" fill="#dc862a" stroke="#5a3410" stroke-width="1.4" stroke-linejoin="round"/><path d="M9 1.6 L15.9 4.8 L9 8.2 L2.1 4.8Z" fill="#fde2b4"/><path d="M9 8.2 L9 16.4 L2.1 12.7 L2.1 4.8Z" fill="#f8c274"/><path d="M2.3 5 L9 8.3 L15.7 5 M9 8.3 V16.2" stroke="#fff" stroke-width=".9" fill="none" opacity=".85"/></svg>
<svg class="a" style="left:1565px;top:770.5px;opacity:1.0" width="18" height="18" viewBox="0 0 18 18"><path d="M2 16 L3 12.5 L10 5.5 L12.5 8 L5.5 15Z" fill="#d8d8d8" stroke="#222" stroke-width="1"/><path d="M9.5 4 L14 8.5" stroke="#111" stroke-width="2.6" stroke-linecap="round"/><path d="M11.5 6.5 L15 3" stroke="#111" stroke-width="4" stroke-linecap="round"/></svg>
<div class="a chk" style="left:1410px;top:798px;width:17px;height:17px;"></div>
<span class="t" style="left:1437.5px;top:802.13px;font-size:13.2px;line-height:13.2px;color:#000;">Lock to Cursor</span>
<div class="a chk" style="left:1410px;top:829px;width:17px;height:16px;"></div>
<span class="t" style="left:1437.5px;top:832.93px;font-size:13.2px;line-height:13.2px;color:#000;">Lock Camera to View</span>
<span class="t" style="left:1415.5px;top:864.13px;font-size:13.2px;line-height:13.2px;color:#000;">Clip:</span>
<div class="a num" style="left:1406px;top:881px;width:182px;height:25px;border-radius:12px 12px 0 0;"></div>
<span class="t" style="left:1425.5px;top:888.33px;font-size:13.2px;line-height:13.2px;color:#000;">Start:</span>
<span class="t" style="left:1165.5px;width:400px;text-align:right;top:888.33px;font-size:13.2px;line-height:13.2px;color:#000;">1cm</span>
<svg class="a" style="left:1413.5px;top:889.2px;" width="5" height="8" viewBox="0 0 5 8"><path d="M5 0 L5 8 L0 4Z" fill="#7c7c7c"/></svg>
<svg class="a" style="left:1575px;top:889.2px;" width="5" height="8" viewBox="0 0 5 8"><path d="M0 0 L0 8 L5 4Z" fill="#7c7c7c"/></svg>
<div class="a num" style="left:1406px;top:905px;width:182px;height:25px;border-radius:0 0 12px 12px;"></div>
<span class="t" style="left:1426.5px;top:912.08px;font-size:13.2px;line-height:13.2px;color:#000;">End:</span>
<span class="t" style="left:1165.5px;width:400px;text-align:right;top:912.08px;font-size:13.2px;line-height:13.2px;color:#000;">15m</span>
<svg class="a" style="left:1413.5px;top:912.95px;" width="5" height="8" viewBox="0 0 5 8"><path d="M5 0 L5 8 L0 4Z" fill="#7c7c7c"/></svg>
<svg class="a" style="left:1575px;top:912.95px;" width="5" height="8" viewBox="0 0 5 8"><path d="M0 0 L0 8 L5 4Z" fill="#7c7c7c"/></svg>
<span class="t" style="left:1415.5px;top:939.13px;font-size:13.2px;line-height:13.2px;color:#555;">Local Camera:</span>
<div class="a txt" style="left:1406px;top:956px;width:182px;height:25px;border-radius:5px;background:linear-gradient(#868686,#929292);border-color:#505050;"></div>
<svg class="a" style="left:1412px;top:959.5px;opacity:0.55" width="18" height="18" viewBox="0 0 18 18"><path d="M9 1 L16.5 4.5 L16.5 13 L9 17 L1.5 13 L1.5 4.5Z" fill="#dc862a" stroke="#5a3410" stroke-width="1.4" stroke-linejoin="round"/><path d="M9 1.6 L15.9 4.8 L9 8.2 L2.1 4.8Z" fill="#fde2b4"/><path d="M9 8.2 L9 16.4 L2.1 12.7 L2.1 4.8Z" fill="#f8c274"/><path d="M2.3 5 L9 8.3 L15.7 5 M9 8.3 V16.2" stroke="#fff" stroke-width=".9" fill="none" opacity=".85"/></svg>
<svg class="a" style="left:1565px;top:959.5px;opacity:0.45" width="18" height="18" viewBox="0 0 18 18"><path d="M2 16 L3 12.5 L10 5.5 L12.5 8 L5.5 15Z" fill="#d8d8d8" stroke="#222" stroke-width="1"/><path d="M9.5 4 L14 8.5" stroke="#111" stroke-width="2.6" stroke-linecap="round"/><path d="M11.5 6.5 L15 3" stroke="#111" stroke-width="4" stroke-linecap="round"/></svg>
<div class="a" style="left:1396px;top:985px;width:200px;height:22.5px;overflow:hidden">
<div class="a chk" style="left:14.5px;top:6.5px;width:16.5px;height:16px"></div>
</div>
<span class="t" style="left:1437.5px;top:994.73px;font-size:13.2px;line-height:13.2px;color:#000;">Render Border</span>
<div class="a " style="left:1621px;top:56px;width:301px;height:203px;background:#727272;"></div>
<div class="a " style="left:1621px;top:56px;width:301px;height:33px;background:#727272;"></div>
<div class="a menu" style="left:1632px;top:60px;width:40px;height:25px;border-radius:5px;"></div>
<svg class="a" style="left:1636px;top:63px;" width="22" height="20" viewBox="0 0 22 20"><path d="M5.5 5 V16.5 H10 M5.5 10.5 H10" stroke="#e8e8e8" stroke-width="1.3" fill="none"/><rect x="1.5" y="1.5" width="9" height="3.2" fill="#f0a040" stroke="#7a4a10" stroke-width=".7"/><rect x="10" y="9" width="7.5" height="3" fill="#f2f2f2" stroke="#555" stroke-width=".6"/><rect x="10" y="15" width="7.5" height="3" fill="#f2f2f2" stroke="#555" stroke-width=".6"/></svg>
<svg class="a" style="left:1659.5px;top:64.7px;" width="8" height="16" viewBox="0 0 8 16"><path d="M4 .6 L7.7 6.8 L.3 6.8Z M4 15.4 L7.7 9.2 L.3 9.2Z" fill="#c2c2c2"/></svg>
<span class="t" style="left:1687.5px;top:68.43px;font-size:13.2px;line-height:13.2px;color:#000;">View</span>
<span class="t" style="left:1743px;top:68.43px;font-size:13.2px;line-height:13.2px;color:#000;">Search</span>
<div class="a menu" style="left:1803px;top:60px;width:130px;height:25px;border-radius:5px;"></div>
<span class="t" style="left:1813px;top:68.43px;font-size:13.2px;line-height:13.2px;color:#fff;">All Scenes</span>
<svg class="a" style="left:1906px;top:57px;" width="14" height="14" viewBox="0 0 12 12"><path d="M3 -1 L13 9 M7 -1 L13 5 M-1 -1 L13 13" stroke="#1c1c1c" stroke-width="1.1"/><path d="M4.2 -1 L13 7.8 M.2 -1 L13 11.8 M8.2 -1 L13 3.8" stroke="#979797" stroke-width=".9"/></svg>
<div class="a " style="left:1621px;top:88px;width:301px;height:171px;background:#727272;"></div>
<div class="a " style="left:1621px;top:138px;width:301px;height:25px;background:#767676;"></div>
<div class="a " style="left:1621px;top:188px;width:301px;height:25px;background:#767676;"></div>
<div class="a " style="left:1621px;top:90px;width:224px;height:23px;background:#80878e;"></div>
<div class="a " style="left:1845px;top:88px;width:1px;height:151px;background:#646464;"></div>
<div class="a " style="left:1870px;top:88px;width:1px;height:151px;background:#646464;"></div>
<div class="a " style="left:1896px;top:88px;width:1px;height:151px;background:#646464;"></div>
<div class="a " style="left:1639px;top:101px;width:12px;height:1px;background:#3c3c3c;"></div>
<div class="a " style="left:1658px;top:108px;width:1px;height:69px;background:#3c3c3c;"></div>
<div class="a " style="left:1664px;top:126px;width:10px;height:1px;background:#3c3c3c;"></div>
<div class="a " style="left:1664px;top:176px;width:10px;height:1px;background:#3c3c3c;"></div>
<svg class="a" style="left:1627px;top:95px;" width="14" height="14" viewBox="0 0 14 14"><circle cx="7" cy="7" r="5" fill="#e6e6e6" stroke="#1a1a1a" stroke-width="1.3"/><path d="M4.2 7 H9.8" stroke="#1a1a1a" stroke-width="1.6"/></svg>
<svg class="a" style="left:1648.5px;top:90.5px;" width="23" height="23" viewBox="0 0 23 23"><circle cx="11.5" cy="11.5" r="11" fill="#b8c0c8" opacity=".55"/></svg>
<svg class="a" style="left:1651px;top:92.5px;" width="18.9" height="18.9" viewBox="0 0 18.9 18.9"><g transform="scale(1.05)"><circle cx="4" cy="4" r="3.6" fill="#e9e27a" opacity=".35"/><circle cx="4" cy="4" r="1.9" fill="#f2ec7a"/><rect x="9" y="2" width="7" height="11" rx="3.2" fill="#4f86d8" stroke="#1d3a6a" stroke-width=".8"/><rect x="10.2" y="3" width="2" height="9" rx="1" fill="#a9c8f4"/><circle cx="6.5" cy="12.5" r="4.3" fill="#e8e8e8" stroke="#333" stroke-width=".9"/><circle cx="5.3" cy="11.2" r="1.6" fill="#fff"/></g></svg>
<span class="t" style="left:1674px;top:96.43px;font-size:13.2px;line-height:13.2px;color:#000;">Scene</span>
<svg class="a" style="left:1652px;top:120px;" width="14" height="14" viewBox="0 0 14 14"><circle cx="7" cy="7" r="5" fill="#e6e6e6" stroke="#1a1a1a" stroke-width="1.3"/><path d="M4.2 7 H9.8" stroke="#1a1a1a" stroke-width="1.6"/><path d="M7 4.2 V9.8" stroke="#1a1a1a" stroke-width="1.6"/></svg>
<svg class="a" style="left:1674px;top:116px;" width="22" height="22" viewBox="0 0 22 22"><g transform="translate(1,1)"><rect x="5" y="6" width="13" height="11" fill="#e9dfb8" stroke="#333" stroke-width="1" transform="rotate(12 11 11)"/><rect x="2" y="2" width="13" height="12" fill="#f4f4f4" stroke="#333" stroke-width="1"/><rect x="3.5" y="3.5" width="10" height="9" fill="#dfe8f6"/><rect x="8" y="4" width="4" height="6" rx="1.6" fill="#3f74d0"/><circle cx="6.8" cy="9.8" r="2.2" fill="#fff" stroke="#444" stroke-width=".6"/><circle cx="5.2" cy="5.2" r="1.4" fill="#e9e27a"/></g></svg>
<span class="t" style="left:1699px;top:121.43px;font-size:13.2px;line-height:13.2px;color:#000;">RenderLayers</span>
<div class="a " style="left:1800px;top:119px;width:3px;height:14px;background:#4a4a4a;border-radius:1px;"></div>
<svg class="a" style="left:1814px;top:116px;" width="22" height="22" viewBox="0 0 22 22"><circle cx="11" cy="11" r="10.5" fill="#d0d0d0" opacity=".55"/><g transform="translate(1,1)"><rect x="5" y="6" width="13" height="11" fill="#e9dfb8" stroke="#333" stroke-width="1" transform="rotate(12 11 11)"/><rect x="2" y="2" width="13" height="12" fill="#f4f4f4" stroke="#333" stroke-width="1"/><rect x="3.5" y="3.5" width="10" height="9" fill="#dfe8f6"/><rect x="8" y="4" width="4" height="6" rx="1.6" fill="#3f74d0"/><circle cx="6.8" cy="9.8" r="2.2" fill="#fff" stroke="#444" stroke-width=".6"/><circle cx="5.2" cy="5.2" r="1.4" fill="#e9e27a"/></g></svg>
<svg class="a" style="left:1674px;top:141px;" width="22" height="22" viewBox="0 0 22 22"><circle cx="11" cy="11" r="10.5" fill="#b9c4dc" opacity=".6"/><circle cx="11" cy="11" r="7.8" fill="#5f8fd0" stroke="#1f3050" stroke-width="1"/><path d="M6 7 Q8 4.5 11 4.5 L12 7 L10 9 L10.5 11.5 L8 12 L7 15.5 Q4.5 13 4.5 10Z" fill="#5aa850"/><path d="M13 10 L16.5 9 L17.5 12 Q16.5 15.5 13.5 16.5 L12.5 13Z" fill="#5aa850"/><ellipse cx="9" cy="7" rx="3.5" ry="2" fill="#fff" opacity=".45"/></svg>
<span class="t" style="left:1699px;top:146.43px;font-size:13.2px;line-height:13.2px;color:#000;">World</span>
<svg class="a" style="left:1652px;top:170px;" width="14" height="14" viewBox="0 0 14 14"><circle cx="7" cy="7" r="5" fill="#e6e6e6" stroke="#1a1a1a" stroke-width="1.3"/><path d="M4.2 7 H9.8" stroke="#1a1a1a" stroke-width="1.6"/><path d="M7 4.2 V9.8" stroke="#1a1a1a" stroke-width="1.6"/></svg>
<svg class="a" style="left:1673px;top:165.5px;" width="22" height="22" viewBox="0 0 22 22"><defs><radialGradient id="mh"><stop offset="0" stop-color="#f09a3c" stop-opacity=".95"/><stop offset=".7" stop-color="#e8963c" stop-opacity=".8"/><stop offset="1" stop-color="#e8963c" stop-opacity=".15"/></radialGradient></defs><circle cx="11" cy="11" r="11" fill="url(#mh)"/><path d="M3.5 4.5 L18.5 4.5 L11 18Z" fill="none" stroke="#5a2c05" stroke-width="3.6" stroke-linejoin="round"/><path d="M3.5 4.5 L18.5 4.5 L11 18Z" fill="none" stroke="#ffe0b0" stroke-width="1.8" stroke-linejoin="round"/></svg>
<span class="t" style="left:1699px;top:171.43px;font-size:13.2px;line-height:13.2px;color:#fff;">table-desk-3</span>
<div class="a " style="left:1792px;top:169px;width:3px;height:14px;background:#4a4a4a;border-radius:1px;"></div>
<svg class="a" style="left:1806.5px;top:165px;" width="22" height="22" viewBox="0 0 22 22"><path d="M4 5 L18 5 L11 17.5Z" fill="none" stroke="#454545" stroke-width="1.2"/><circle cx="4" cy="5" r="1.8" fill="#c4c4c4" stroke="#3a3a3a" stroke-width=".9"/><circle cx="18" cy="5" r="1.8" fill="#c4c4c4" stroke="#3a3a3a" stroke-width=".9"/><circle cx="11" cy="17.5" r="1.8" fill="#c4c4c4" stroke="#3a3a3a" stroke-width=".9"/></svg>
<svg class="a" style="left:1849px;top:168px;" width="18" height="16" viewBox="0 0 18 16"><path d="M1 8 Q9 -1 17 8 Q9 16 1 8Z" fill="#f4f4f4" stroke="#222" stroke-width="1.1"/><circle cx="9" cy="7.6" r="3.3" fill="#222"/><circle cx="8" cy="6.5" r="1" fill="#fff"/></svg>
<svg class="a" style="left:1878px;top:167px;" width="14" height="18" viewBox="0 0 14 18"><path d="M2 1 L2 14.5 L5.2 11.5 L7.6 17 L10 16 L7.7 10.6 L12 10.4Z" fill="#f4f4f4" stroke="#111" stroke-width="1.1" stroke-linejoin="round"/></svg>
<svg class="a" style="left:1898.5px;top:165.5px;" width="20" height="19" viewBox="0 0 20 19"><rect x="1.5" y="5.5" width="16" height="11.5" rx="1.5" fill="#5a5a5a" stroke="#1c1c1c" stroke-width="1.1"/><rect x="3.5" y="3" width="5" height="3" fill="#8a8a8a" stroke="#1c1c1c" stroke-width=".9"/><rect x="2.5" y="7" width="14" height="2" fill="#d0d0d0"/><circle cx="10" cy="11.8" r="4.2" fill="#d8d8d8" stroke="#1c1c1c" stroke-width="1"/><circle cx="10" cy="11.8" r="2.4" fill="#8c4a4a" stroke="#332" stroke-width=".7"/><circle cx="9.2" cy="11" r=".9" fill="#fff"/></svg>
<div class="a sbt" style="left:1626px;top:238px;width:288px;height:16px;"></div>
<div class="a sbv" style="left:1626px;top:238px;width:245px;height:16px;"></div>
<svg class="a" style="left:1621px;top:245px;" width="14" height="14" viewBox="0 0 12 12"><path d="M-1 3 L9 13 M-1 7 L5 13 M-1 -1 L13 13" stroke="#1c1c1c" stroke-width="1.1"/><path d="M-1 4.2 L7.8 13 M-1 .2 L11.8 13 M-1 8.2 L3.8 13" stroke="#979797" stroke-width=".9"/></svg>
<div class="a " style="left:1621px;top:259px;width:301px;height:33px;background:#727272;"></div>
<div class="a menu" style="left:1632px;top:264px;width:40px;height:25px;border-radius:5px;"></div>
<svg class="a" style="left:1637px;top:267px;" width="22" height="20" viewBox="0 0 22 20"><rect x="1" y="2.5" width="16.5" height="6" rx="2.8" fill="#dedede" stroke="#1e1e1e" stroke-width="1"/><rect x="2.2" y="3.7" width="9" height="3.6" rx="1.6" fill="#505050"/><rect x="1" y="11.5" width="16.5" height="6" rx="2.8" fill="#f4f4f4" stroke="#1e1e1e" stroke-width="1"/><rect x="5.5" y="12.8" width="7.5" height="3.4" fill="#c9c9c9"/><path d="M2.6 14.5 L5 12.7 V16.3Z M15.9 14.5 L13.5 12.7 V16.3Z" fill="#111"/></svg>
<svg class="a" style="left:1659.5px;top:268.5px;" width="8" height="16" viewBox="0 0 8 16"><path d="M4 .6 L7.7 6.8 L.3 6.8Z M4 15.4 L7.7 9.2 L.3 9.2Z" fill="#c2c2c2"/></svg>
<div class="a menu" style="left:1682px;top:264px;width:26px;height:25px;border-radius:5px 0 0 5px;background:linear-gradient(#545454,#414141);"></div>
<div class="a menu" style="left:1707px;top:264px;width:26px;height:25px;border-radius:0;background:linear-gradient(#545454,#414141);"></div>
<div class="a menu" style="left:1732px;top:264px;width:26px;height:25px;border-radius:0;background:linear-gradient(#545454,#414141);"></div>
<div class="a menu" style="left:1757px;top:264px;width:25px;height:25px;border-radius:0;background:linear-gradient(#545454,#414141);"></div>
<div class="a menu" style="left:1781px;top:264px;width:26px;height:25px;border-radius:0;background:linear-gradient(#545454,#414141);"></div>
<div class="a menu" style="left:1806px;top:264px;width:26px;height:25px;border-radius:0;background:linear-gradient(#545454,#414141);"></div>
<div class="a menu" style="left:1831px;top:264px;width:26px;height:25px;border-radius:0;background:linear-gradient(#545454,#414141);"></div>
<div class="a menu" style="left:1856px;top:264px;width:26px;height:25px;border-radius:0;background:linear-gradient(#545454,#414141);"></div>
<div class="a sel" style="left:1881px;top:264px;width:26px;height:25px;border-radius:0;"></div>
<div class="a menu" style="left:1906px;top:264px;width:26px;height:25px;border-radius:0;background:linear-gradient(#545454,#414141);"></div>
<svg class="a" style="left:1685px;top:267px;" width="20" height="19" viewBox="0 0 20 19"><g opacity=".8"><rect x="1.5" y="5.5" width="16" height="11.5" rx="1.5" fill="#6a6a6a" stroke="#222" stroke-width="1.1"/><rect x="3.5" y="3" width="5" height="3" fill="#8a8a8a" stroke="#222" stroke-width=".9"/><rect x="2.5" y="7" width="14" height="2" fill="#c0c0c0"/><circle cx="10" cy="11.8" r="4.2" fill="#c8c8c8" stroke="#222" stroke-width="1"/><circle cx="10" cy="11.8" r="2.4" fill="#8c4a4a"/></g></svg>
<svg class="a" style="left:1708.5px;top:264.5px;" width="22" height="22" viewBox="0 0 22 22"><g transform="translate(1,1)"><rect x="5" y="6" width="13" height="11" fill="#e9dfb8" stroke="#333" stroke-width="1" transform="rotate(12 11 11)"/><rect x="2" y="2" width="13" height="12" fill="#f4f4f4" stroke="#333" stroke-width="1"/><rect x="3.5" y="3.5" width="10" height="9" fill="#dfe8f6"/><rect x="8" y="4" width="4" height="6" rx="1.6" fill="#3f74d0"/><circle cx="6.8" cy="9.8" r="2.2" fill="#fff" stroke="#444" stroke-width=".6"/><circle cx="5.2" cy="5.2" r="1.4" fill="#e9e27a"/></g></svg>
<svg class="a" style="left:1735.5px;top:267px;" width="18" height="18" viewBox="0 0 18 18"><g transform="scale(1)"><circle cx="4" cy="4" r="3.6" fill="#e9e27a" opacity=".35"/><circle cx="4" cy="4" r="1.9" fill="#f2ec7a"/><rect x="9" y="2" width="7" height="11" rx="3.2" fill="#4f86d8" stroke="#1d3a6a" stroke-width=".8"/><rect x="10.2" y="3" width="2" height="9" rx="1" fill="#a9c8f4"/><circle cx="6.5" cy="12.5" r="4.3" fill="#e8e8e8" stroke="#333" stroke-width=".9"/><circle cx="5.3" cy="11.2" r="1.6" fill="#fff"/></g></svg>
<svg class="a" style="left:1758.5px;top:265.5px;" width="22" height="22" viewBox="0 0 22 22"><circle cx="11" cy="11" r="7.8" fill="#5f8fd0" stroke="#1f3050" stroke-width="1"/><path d="M6 7 Q8 4.5 11 4.5 L12 7 L10 9 L10.5 11.5 L8 12 L7 15.5 Q4.5 13 4.5 10Z" fill="#5aa850"/><path d="M13 10 L16.5 9 L17.5 12 Q16.5 15.5 13.5 16.5 L12.5 13Z" fill="#5aa850"/><ellipse cx="9" cy="7" rx="3.5" ry="2" fill="#fff" opacity=".45"/></svg>
<svg class="a" style="left:1785px;top:267.5px;opacity:1.0" width="18" height="18" viewBox="0 0 18 18"><path d="M9 1 L16.5 4.5 L16.5 13 L9 17 L1.5 13 L1.5 4.5Z" fill="#dc862a" stroke="#5a3410" stroke-width="1.4" stroke-linejoin="round"/><path d="M9 1.6 L15.9 4.8 L9 8.2 L2.1 4.8Z" fill="#fde2b4"/><path d="M9 8.2 L9 16.4 L2.1 12.7 L2.1 4.8Z" fill="#f8c274"/><path d="M2.3 5 L9 8.3 L15.7 5 M9 8.3 V16.2" stroke="#fff" stroke-width=".9" fill="none" opacity=".85"/></svg>
<svg class="a" style="left:1808.5px;top:267px;" width="22" height="20" viewBox="0 0 22 20"><g fill="none" stroke="#222" stroke-width="4.4"><rect x="3" y="9" width="9" height="6.5" rx="3.2" transform="rotate(-32 7.5 12)"/><rect x="10" y="4" width="9" height="6.5" rx="3.2" transform="rotate(-32 14.5 7)"/></g><g fill="none" stroke="#cfcfcf" stroke-width="2.2"><rect x="3" y="9" width="9" height="6.5" rx="3.2" transform="rotate(-32 7.5 12)"/><rect x="10" y="4" width="9" height="6.5" rx="3.2" transform="rotate(-32 14.5 7)"/></g></svg>
<svg class="a" style="left:1833.5px;top:267px;" width="22" height="20" viewBox="0 0 22 20"><path d="M3 17.5 L11.5 9 Q10.5 5.5 13 3.2 Q15 1.6 17.5 2.3 L14.5 5.3 L15.2 7.8 L17.7 8.5 L20.5 5.5 Q21 8 19.4 10 Q17 12.3 14 11.3 L5.5 19.5Z" fill="#6f93c9" stroke="#1a2a4a" stroke-width="1"/></svg>
<svg class="a" style="left:1858px;top:265.5px;" width="22" height="22" viewBox="0 0 22 22"><path d="M4 5 L18 5 L11 17.5Z" fill="none" stroke="#e0e0e0" stroke-width="1.5"/><circle cx="4" cy="5" r="2.1" fill="#f4f4f4" stroke="#3a3a3a" stroke-width=".9"/><circle cx="18" cy="5" r="2.1" fill="#f4f4f4" stroke="#3a3a3a" stroke-width=".9"/><circle cx="11" cy="17.5" r="2.1" fill="#f4f4f4" stroke="#3a3a3a" stroke-width=".9"/></svg>
<svg class="a" style="left:1884.5px;top:267.5px;" width="18" height="18" viewBox="0 0 18 18"><defs><radialGradient id="mg" cx=".4" cy=".35" r=".7"><stop offset=".3" stop-color="#000" stop-opacity="0"/><stop offset="1" stop-color="#000" stop-opacity=".38"/></radialGradient></defs><g transform="scale(1)"><circle cx="9" cy="9" r="7.8" fill="#e4e4e4" stroke="#2a2a2a" stroke-width="1"/><path d="M9 9 L14.5 3.5 A7.8 7.8 0 0 1 16.8 9Z" fill="#a8513f"/><path d="M9 9 L3.5 14.5 A7.8 7.8 0 0 0 9 16.8Z" fill="#a8513f"/><path d="M9 9 L16.8 9 A7.8 7.8 0 0 1 9 16.8Z" fill="#f3d9d3"/><circle cx="9" cy="9" r="7.8" fill="none" stroke="#2a2a2a" stroke-width="1"/><circle cx="9" cy="9" r="7.3" fill="url(#mg)"/><ellipse cx="6.3" cy="5.6" rx="3" ry="2.2" fill="#fff" opacity=".8"/></g></svg>
<svg class="a" style="left:1909px;top:267px;" width="20" height="20" viewBox="0 0 20 20"><rect x="1" y="1" width="17" height="17" fill="#e8e0d8" stroke="#222" stroke-width="1"/><rect x="1" y="1" width="5.6" height="5.6" fill="#c0584a"/><rect x="12.2" y="1" width="5.6" height="5.6" fill="#c0584a"/><rect x="6.6" y="6.6" width="5.6" height="5.6" fill="#c0584a"/><rect x="1" y="12.2" width="5.6" height="5.6" fill="#c0584a"/></svg>
<div class="a " style="left:1683px;top:265px;width:25px;height:23px;background:rgba(74,74,74,.38);"></div>
<div class="a " style="left:1708px;top:265px;width:24px;height:23px;background:rgba(74,74,74,.38);"></div>
<div class="a " style="left:1733px;top:265px;width:24px;height:23px;background:rgba(74,74,74,.38);"></div>
<div class="a " style="left:1758px;top:265px;width:24px;height:23px;background:rgba(74,74,74,.38);"></div>
<div class="a " style="left:1782px;top:265px;width:25px;height:23px;background:rgba(74,74,74,.38);"></div>
<div class="a " style="left:1807px;top:265px;width:25px;height:23px;background:rgba(74,74,74,.38);"></div>
<div class="a " style="left:1832px;top:265px;width:25px;height:23px;background:rgba(74,74,74,.38);"></div>
<div class="a " style="left:1857px;top:265px;width:24px;height:23px;background:rgba(74,74,74,.38);"></div>
<div class="a " style="left:1907px;top:265px;width:24px;height:23px;background:rgba(74,74,74,.38);"></div>
<svg class="a" style="left:1906px;top:260px;" width="14" height="14" viewBox="0 0 12 12"><path d="M3 -1 L13 9 M7 -1 L13 5 M-1 -1 L13 13" stroke="#1c1c1c" stroke-width="1.1"/><path d="M4.2 -1 L13 7.8 M.2 -1 L13 11.8 M8.2 -1 L13 3.8" stroke="#979797" stroke-width=".9"/></svg>
<div class="a " style="left:1621px;top:259px;width:300px;height:1px;background:#050505;"></div>
<div class="a " style="left:1621px;top:292px;width:301px;height:748px;background:#727272;"></div>
<div class="a sbt" style="left:1898px;top:298px;width:17px;height:737px;"></div>
<div class="a sbh" style="left:1898px;top:298px;width:17px;height:490px;"></div>
<svg class="a" style="left:1633px;top:305px;" width="22" height="22" viewBox="0 0 22 22"><path d="M2.5 19.5 L9 13" stroke="#222" stroke-width="2.6" stroke-linecap="round"/><path d="M2.5 19.5 L9 13" stroke="#e8e8e8" stroke-width="1.2" stroke-linecap="round"/><path d="M6.5 10 L12 15.5 L13.2 12.8 L16.8 9.5 L19.3 9.5 L12.5 2.7 L12.5 5.2 L9.2 8.8Z" fill="#ececec" stroke="#222" stroke-width="1.1" stroke-linejoin="round"/></svg>
<svg class="a" style="left:1659.5px;top:306px;" width="18" height="18" viewBox="0 0 18 18"><g transform="scale(1)"><circle cx="4" cy="4" r="3.6" fill="#e9e27a" opacity=".35"/><circle cx="4" cy="4" r="1.9" fill="#f2ec7a"/><rect x="9" y="2" width="7" height="11" rx="3.2" fill="#4f86d8" stroke="#1d3a6a" stroke-width=".8"/><rect x="10.2" y="3" width="2" height="9" rx="1" fill="#a9c8f4"/><circle cx="6.5" cy="12.5" r="4.3" fill="#e8e8e8" stroke="#333" stroke-width=".9"/><circle cx="5.3" cy="11.2" r="1.6" fill="#fff"/></g></svg>
<svg class="a" style="left:1685.5px;top:310px;" width="6" height="9" viewBox="0 0 6 9"><path d="M0 0 L0 9 L5 4.5Z" fill="#3c3c3c"/></svg>
<svg class="a" style="left:1710.5px;top:306px;opacity:1.0" width="18" height="18" viewBox="0 0 18 18"><path d="M9 1 L16.5 4.5 L16.5 13 L9 17 L1.5 13 L1.5 4.5Z" fill="#dc862a" stroke="#5a3410" stroke-width="1.4" stroke-linejoin="round"/><path d="M9 1.6 L15.9 4.8 L9 8.2 L2.1 4.8Z" fill="#fde2b4"/><path d="M9 8.2 L9 16.4 L2.1 12.7 L2.1 4.8Z" fill="#f8c274"/><path d="M2.3 5 L9 8.3 L15.7 5 M9 8.3 V16.2" stroke="#fff" stroke-width=".9" fill="none" opacity=".85"/></svg>
<span class="t" style="left:1735.5px;top:309.93px;font-size:13.2px;line-height:13.2px;color:#000;">table-d</span>
<svg class="a" style="left:1789.5px;top:310px;" width="6" height="9" viewBox="0 0 6 9"><path d="M0 0 L0 9 L5 4.5Z" fill="#3c3c3c"/></svg>
<svg class="a" style="left:1812px;top:306px;" width="18" height="18" viewBox="0 0 18 18"><defs><radialGradient id="mg" cx=".4" cy=".35" r=".7"><stop offset=".3" stop-color="#000" stop-opacity="0"/><stop offset="1" stop-color="#000" stop-opacity=".38"/></radialGradient></defs><g transform="scale(1)"><circle cx="9" cy="9" r="7.8" fill="#e4e4e4" stroke="#2a2a2a" stroke-width="1"/><path d="M9 9 L14.5 3.5 A7.8 7.8 0 0 1 16.8 9Z" fill="#a8513f"/><path d="M9 9 L3.5 14.5 A7.8 7.8 0 0 0 9 16.8Z" fill="#a8513f"/><path d="M9 9 L16.8 9 A7.8 7.8 0 0 1 9 16.8Z" fill="#f3d9d3"/><circle cx="9" cy="9" r="7.8" fill="none" stroke="#2a2a2a" stroke-width="1"/><circle cx="9" cy="9" r="7.3" fill="url(#mg)"/><ellipse cx="6.3" cy="5.6" rx="3" ry="2.2" fill="#fff" opacity=".8"/></g></svg>
<span class="t" style="left:1837.5px;top:309.93px;font-size:13.2px;line-height:13.2px;color:#000;">table-d</span>
<div class="a bx" style="left:1631px;top:347px;width:221px;height:149px;background:#818181;"></div>
<div class="a " style="left:1638px;top:353px;width:208px;height:25px;background:#5680c2;"></div>
<svg class="a" style="left:1639px;top:356px;" width="20" height="20" viewBox="0 0 20 20"><circle cx="10" cy="10" r="9.3" fill="#000"/><path d="M3.4 16.6 A9.3 9.3 0 0 1 16.6 3.4Z" fill="#c814c8"/><path d="M16.6 3.4 L3.4 16.6" stroke="#000" stroke-width="1"/></svg>
<span class="t" style="left:1666px;top:360.43px;font-size:13.2px;line-height:13.2px;color:#fff;">table-desk-3</span>
<svg class="a" style="left:1641.7px;top:476px;" width="14" height="14" viewBox="0 0 14 14"><circle cx="7" cy="7" r="4.3" fill="#8a8a8a" stroke="#555" stroke-width="1.3"/><path d="M4.2 7 H9.8" stroke="#555" stroke-width="1.6"/><path d="M7 4.2 V9.8" stroke="#555" stroke-width="1.6"/></svg>
<div class="a " style="left:1745px;top:481px;width:19px;height:1.5px;background:#d0d0d0;box-shadow:0 1px 0 #555;"></div>
<div class="a " style="left:1745px;top:485px;width:19px;height:1.5px;background:#d0d0d0;box-shadow:0 1px 0 #555;"></div>
<div class="a tool" style="left:1863px;top:347px;width:25px;height:25px;border-radius:5px 5px 0 0;"></div>
<div class="a tool" style="left:1863px;top:371px;width:25px;height:26px;border-radius:0;"></div>
<div class="a menu" style="left:1863px;top:396px;width:25px;height:25px;border-radius:0 0 5px 5px;"></div>
<svg class="a" style="left:1866px;top:350.5px;" width="18" height="18" viewBox="0 0 18 18"><path d="M9 3.2 V14.8 M3.2 9 H14.8" stroke="#2e2e2e" stroke-width="4.8" stroke-linecap="round"/><path d="M9 3.6 V14.4 M3.6 9 H14.4" stroke="#f4f4f4" stroke-width="2.7" stroke-linecap="round"/></svg>
<svg class="a" style="left:1866px;top:375px;" width="18" height="18" viewBox="0 0 18 18"><path d="M3.2 9 H14.8" stroke="#2e2e2e" stroke-width="4.8" stroke-linecap="round"/><path d="M3.6 9 H14.4" stroke="#f4f4f4" stroke-width="2.7" stroke-linecap="round"/></svg>
<svg class="a" style="left:1868px;top:402px;" width="15" height="14" viewBox="0 0 15 14"><path d="M1 1.5 L13.5 1.5 L7.2 12.5Z" fill="#111"/><path d="M11 3 L8 10.5" stroke="#cfcfcf" stroke-width="1.6"/></svg>
<div class="a menu" style="left:1631px;top:502px;width:38px;height:25px;border-radius:5px 0 0 5px;"></div>
<svg class="a" style="left:1636px;top:505.5px;" width="17.1" height="17.1" viewBox="0 0 17.1 17.1"><defs><radialGradient id="mg" cx=".4" cy=".35" r=".7"><stop offset=".3" stop-color="#000" stop-opacity="0"/><stop offset="1" stop-color="#000" stop-opacity=".38"/></radialGradient></defs><g transform="scale(0.95)"><circle cx="9" cy="9" r="7.8" fill="#e4e4e4" stroke="#2a2a2a" stroke-width="1"/><path d="M9 9 L14.5 3.5 A7.8 7.8 0 0 1 16.8 9Z" fill="#a8513f"/><path d="M9 9 L3.5 14.5 A7.8 7.8 0 0 0 9 16.8Z" fill="#a8513f"/><path d="M9 9 L16.8 9 A7.8 7.8 0 0 1 9 16.8Z" fill="#f3d9d3"/><circle cx="9" cy="9" r="7.8" fill="none" stroke="#2a2a2a" stroke-width="1"/><circle cx="9" cy="9" r="7.3" fill="url(#mg)"/><ellipse cx="6.3" cy="5.6" rx="3" ry="2.2" fill="#fff" opacity=".8"/></g></svg>
<svg class="a" style="left:1656.5px;top:506.5px;" width="8" height="16" viewBox="0 0 8 16"><path d="M4 .6 L7.7 6.8 L.3 6.8Z M4 15.4 L7.7 9.2 L.3 9.2Z" fill="#c2c2c2"/></svg>
<div class="a txt" style="left:1668px;top:502px;width:50px;height:25px;border-radius:0;background:linear-gradient(#aeaeae,#c2c2c2);"></div>
<span class="t" style="left:1676px;top:509.93px;font-size:13.2px;line-height:13.2px;color:#000;">table-</span>
<div class="a tool" style="left:1717px;top:502px;width:25px;height:25px;border-radius:0;"></div>
<span class="t" style="left:1529px;width:400px;text-align:center;top:509.93px;font-size:13.2px;line-height:13.2px;color:#000;">F</span>
<div class="a tool" style="left:1741px;top:502px;width:25px;height:25px;border-radius:0;"></div>
<div class="a tool" style="left:1765px;top:502px;width:25px;height:25px;border-radius:0 5px 5px 0;"></div>
<svg class="a" style="left:1744.5px;top:505.5px;" width="18" height="18" viewBox="0 0 18 18"><path d="M9 3.2 V14.8 M3.2 9 H14.8" stroke="#2e2e2e" stroke-width="4.8" stroke-linecap="round"/><path d="M9 3.6 V14.4 M3.6 9 H14.4" stroke="#f4f4f4" stroke-width="2.7" stroke-linecap="round"/></svg>
<svg class="a" style="left:1768.5px;top:505.5px;" width="18" height="18" viewBox="0 0 18 18"><path d="M4.3 4.3 L13.7 13.7 M13.7 4.3 L4.3 13.7" stroke="#2e2e2e" stroke-width="4.8" stroke-linecap="round"/><path d="M4.7 4.7 L13.3 13.3 M13.3 4.7 L4.7 13.3" stroke="#f4f4f4" stroke-width="2.7" stroke-linecap="round"/></svg>
<div class="a menu" style="left:1801px;top:502px;width:87px;height:25px;border-radius:5px;"></div>
<span class="t" style="left:1810px;top:509.93px;font-size:13.2px;line-height:13.2px;color:#fff;">Data</span>
<svg class="a" style="left:1875.5px;top:506.5px;" width="8" height="16" viewBox="0 0 8 16"><path d="M4 .6 L7.7 6.8 L.3 6.8Z M4 15.4 L7.7 9.2 L.3 9.2Z" fill="#c2c2c2"/></svg>
<div class="a " style="left:1626px;top:536px;width:266px;height:1px;background:#5a5a5a;box-shadow:0 1px 0 #7e7e7e;"></div>
<svg class="a" style="left:1635.7px;top:545.8px;" width="11" height="10" viewBox="0 0 11 10"><path d="M0 0 L10.5 4.7 L0 9.4Z" fill="#1a1a1a"/></svg>
<span class="t" style="left:1651.2px;top:544.42px;font-size:14.4px;line-height:14.4px;color:#000;letter-spacing:.05px;">Custom Properties</span>
<svg class="a" style="left:1872.5px;top:548px;" width="15" height="7" viewBox="0 0 15 7"><rect x="0" y="0" width="2" height="2" fill="#c9c9c9"/><rect x="0" y="2" width="2" height="1" fill="#4a4a4a" opacity=".5"/><rect x="0" y="4" width="2" height="2" fill="#c9c9c9"/><rect x="0" y="6" width="2" height="1" fill="#4a4a4a" opacity=".5"/><rect x="4" y="0" width="2" height="2" fill="#c9c9c9"/><rect x="4" y="2" width="2" height="1" fill="#4a4a4a" opacity=".5"/><rect x="4" y="4" width="2" height="2" fill="#c9c9c9"/><rect x="4" y="6" width="2" height="1" fill="#4a4a4a" opacity=".5"/><rect x="8" y="0" width="2" height="2" fill="#c9c9c9"/><rect x="8" y="2" width="2" height="1" fill="#4a4a4a" opacity=".5"/><rect x="8" y="4" width="2" height="2" fill="#c9c9c9"/><rect x="8" y="6" width="2" height="1" fill="#4a4a4a" opacity=".5"/><rect x="12" y="0" width="2" height="2" fill="#c9c9c9"/><rect x="12" y="2" width="2" height="1" fill="#4a4a4a" opacity=".5"/><rect x="12" y="4" width="2" height="2" fill="#c9c9c9"/><rect x="12" y="6" width="2" height="1" fill="#4a4a4a" opacity=".5"/></svg>
<div class="a " style="left:1626px;top:565px;width:266px;height:1px;background:#5a5a5a;box-shadow:0 1px 0 #7e7e7e;"></div>
<svg class="a" style="left:1635.7px;top:574.5px;" width="10" height="12" viewBox="0 0 10 12"><path d="M0 0 L9.6 0 L4.8 11.3Z" fill="#1a1a1a"/></svg>
<span class="t" style="left:1651.2px;top:573.42px;font-size:14.4px;line-height:14.4px;color:#000;letter-spacing:.05px;">Preview</span>
<svg class="a" style="left:1872.5px;top:577px;" width="15" height="7" viewBox="0 0 15 7"><rect x="0" y="0" width="2" height="2" fill="#c9c9c9"/><rect x="0" y="2" width="2" height="1" fill="#4a4a4a" opacity=".5"/><rect x="0" y="4" width="2" height="2" fill="#c9c9c9"/><rect x="0" y="6" width="2" height="1" fill="#4a4a4a" opacity=".5"/><rect x="4" y="0" width="2" height="2" fill="#c9c9c9"/><rect x="4" y="2" width="2" height="1" fill="#4a4a4a" opacity=".5"/><rect x="4" y="4" width="2" height="2" fill="#c9c9c9"/><rect x="4" y="6" width="2" height="1" fill="#4a4a4a" opacity=".5"/><rect x="8" y="0" width="2" height="2" fill="#c9c9c9"/><rect x="8" y="2" width="2" height="1" fill="#4a4a4a" opacity=".5"/><rect x="8" y="4" width="2" height="2" fill="#c9c9c9"/><rect x="8" y="6" width="2" height="1" fill="#4a4a4a" opacity=".5"/><rect x="12" y="0" width="2" height="2" fill="#c9c9c9"/><rect x="12" y="2" width="2" height="1" fill="#4a4a4a" opacity=".5"/><rect x="12" y="4" width="2" height="2" fill="#c9c9c9"/><rect x="12" y="6" width="2" height="1" fill="#4a4a4a" opacity=".5"/></svg>
<svg class="a" style="left:1631px;top:605px" width="210" height="122.5" viewBox="0 0 210 122.5"><defs><clipPath id="pc"><rect x="0" y="0" width="210" height="122.5" rx="5"/></clipPath><pattern id="ck" width="34.4" height="34" patternUnits="userSpaceOnUse" x="0" y="0"><rect width="34.4" height="34" fill="#545454"/><rect width="17.2" height="17" fill="#6d6d6d"/><rect x="17.2" y="17" width="17.2" height="17" fill="#6d6d6d"/></pattern><linearGradient id="fl" x1="0" x2="0" y1="0" y2="1"><stop offset="0" stop-color="#606060" stop-opacity="0"/><stop offset=".35" stop-color="#6a6a6a"/><stop offset="1" stop-color="#868686"/></linearGradient><radialGradient id="sh" cx=".5" cy=".5" r=".5"><stop offset="0" stop-color="#000" stop-opacity=".95"/><stop offset=".55" stop-color="#000" stop-opacity=".75"/><stop offset="1" stop-color="#000" stop-opacity="0"/></radialGradient><clipPath id="sc"><circle cx="105.2" cy="59.8" r="56.5"/></clipPath><radialGradient id="mgn" gradientUnits="userSpaceOnUse" cx="78" cy="30" r="80"><stop offset="0" stop-color="#9c12a4"/><stop offset=".45" stop-color="#7c0c84"/><stop offset="1" stop-color="#520658"/></radialGradient><radialGradient id="vg" cx=".5" cy=".5" r=".75"><stop offset=".6" stop-color="#000" stop-opacity="0"/><stop offset="1" stop-color="#000" stop-opacity=".4"/></radialGradient><filter id="pb" x="-20%" y="-20%" width="140%" height="140%"><feGaussianBlur stdDeviation="1.6"/></filter></defs><g clip-path="url(#pc)"><rect width="210" height="122.5" fill="url(#ck)"/><rect y="58" width="210" height="65" fill="url(#fl)"/><path d="M0 92 L30 88 L58 88 L40 100 L0 104Z M58 88 L105 86 L100 100 L40 100Z" fill="#5c5c5c" opacity=".45"/><path d="M0 104 L40 100 L100 100 L96 123 L0 123Z" fill="#8e8e8e" opacity=".35"/><path d="M0 112 L50 108 L25 123 L0 123Z" fill="#5a5a5a" opacity=".45"/><ellipse cx="168" cy="106" rx="70" ry="21" fill="url(#sh)"/><rect width="210" height="122.5" fill="url(#vg)"/><circle cx="105.2" cy="59.8" r="56.5" fill="#030303"/><g clip-path="url(#sc)"><path d="M122 0 L120.8 7 C119 14 117 20 114.4 25.5 C111 31 107 35.5 103 39.5 C98.5 44.5 94 50 90.3 54.7 C85.5 60.5 81 66 77.6 71.2 C74.8 75.5 73 80 72.5 84 C72.5 89 74 93 76.3 96.7 C78.5 100.5 81 104 84 106.8 C88 110.5 92 113 96.7 115 L96 123 L0 123 L0 0Z" fill="url(#mgn)"/><path d="M62 40 C70 30 84 24 100 22 C96 32 90 42 84 50 C76 50 68 46 62 40Z" fill="#b41cbc" opacity=".5"/><path d="M56 62 C58 52 62 44 68 40 C74 46 80 50 86 52 C80 60 76 68 73 76 C66 74 60 69 56 62Z" fill="#7a0c82" opacity=".55"/><path d="M50.5 52 Q55 24 90 6.5" stroke="#f050f8" stroke-width="3.2" fill="none" opacity=".85" filter="url(#pb)"/></g></g><rect x=".5" y=".5" width="209" height="121.5" rx="5" fill="none" stroke="#353535"/></svg>
<div class="a " style="left:1727px;top:731px;width:19px;height:1.5px;background:#d0d0d0;box-shadow:0 1px 0 #555;"></div>
<div class="a " style="left:1727px;top:735px;width:19px;height:1.5px;background:#d0d0d0;box-shadow:0 1px 0 #555;"></div>
<div class="a menu" style="left:1851px;top:605px;width:37px;height:26px;border-radius:5px 5px 0 0;"></div>
<div class="a sel" style="left:1851px;top:630px;width:37px;height:26px;border-radius:0;"></div>
<div class="a menu" style="left:1851px;top:655px;width:37px;height:25px;border-radius:0;"></div>
<div class="a menu" style="left:1851px;top:679px;width:37px;height:26px;border-radius:0;"></div>
<div class="a menu" style="left:1851px;top:704px;width:37px;height:26px;border-radius:0;"></div>
<div class="a menu" style="left:1851px;top:729px;width:37px;height:25px;border-radius:0 0 5px 5px;"></div>
<svg class="a" style="left:1859px;top:608px;" width="20" height="20" viewBox="0 0 20 20"><rect x="3.5" y="2.5" width="13.5" height="14.5" fill="#a8a8a8" stroke="#333" stroke-width="1"/><rect x="4.5" y="3.5" width="11.5" height="12.5" fill="#bdbdbd" opacity=".6"/></svg>
<svg class="a" style="left:1859px;top:632.5px;" width="20" height="20" viewBox="0 0 20 20"><circle cx="10" cy="10" r="7.8" fill="#dcdcdc" stroke="#1a1a1a" stroke-width="1.3"/><circle cx="8.2" cy="8" r="4" fill="#fff"/></svg>
<svg class="a" style="left:1859px;top:657.5px;" width="20" height="20" viewBox="0 0 20 20"><path d="M10 2 L17 5.5 L17 14 L10 18 L3 14 L3 5.5Z" fill="#a2a2a2" stroke="#333" stroke-width="1"/><path d="M10 2 L17 5.5 L10 9 L3 5.5Z" fill="#c8c8c8"/><path d="M10 9 V18 L3 14 V5.5Z" fill="#b0b0b0"/></svg>
<svg class="a" style="left:1859px;top:682px;" width="20" height="20" viewBox="0 0 20 20"><path d="M4 5 Q2 3.5 3 7 L5 10 L7.5 12 L8 16 L10 18 L12 16 L12.5 12 L15 10 L17 7 Q18 3.5 16 5 L13 4 L10 3 L7 4Z" fill="#b0b0b0" stroke="#333" stroke-width="1"/><circle cx="7.5" cy="8" r="1.2" fill="#555"/><circle cx="12.5" cy="8" r="1.2" fill="#555"/></svg>
<svg class="a" style="left:1859px;top:707px;" width="20" height="20" viewBox="0 0 20 20"><path d="M4 17 Q4 7 8 2" stroke="#333" stroke-width="3.2" fill="none" stroke-linecap="round"/><path d="M9 17 Q9 9 13 5.5" stroke="#333" stroke-width="3.2" fill="none" stroke-linecap="round"/><path d="M14 17 Q14.5 12 17.5 10" stroke="#333" stroke-width="3.2" fill="none" stroke-linecap="round"/><path d="M4 17 Q4 7 8 2 M9 17 Q9 9 13 5.5 M14 17 Q14.5 12 17.5 10" stroke="#bcbcbc" stroke-width="1.7" fill="none" stroke-linecap="round"/></svg>
<svg class="a" style="left:1857px;top:731.5px;" width="24" height="22" viewBox="0 0 24 22"><circle cx="8" cy="6" r="4.5" fill="#d8d29a" opacity=".5"/><circle cx="16" cy="7" r="4.5" fill="#8aa8d8" opacity=".6"/><circle cx="10" cy="14" r="6" fill="#b8b8b8" stroke="#444" stroke-width="1"/><circle cx="8.5" cy="12" r="2.4" fill="#e4e4e4"/></svg>
<div class="a " style="left:1626px;top:764px;width:266px;height:1px;background:#5a5a5a;box-shadow:0 1px 0 #7e7e7e;"></div>
<svg class="a" style="left:1635.7px;top:773.2px;" width="10" height="12" viewBox="0 0 10 12"><path d="M0 0 L9.6 0 L4.8 11.3Z" fill="#1a1a1a"/></svg>
<span class="t" style="left:1651.2px;top:772.12px;font-size:14.4px;line-height:14.4px;color:#000;letter-spacing:.05px;">Surface</span>
<svg class="a" style="left:1872.5px;top:775.7px;" width="15" height="7" viewBox="0 0 15 7"><rect x="0" y="0" width="2" height="2" fill="#c9c9c9"/><rect x="0" y="2" width="2" height="1" fill="#4a4a4a" opacity=".5"/><rect x="0" y="4" width="2" height="2" fill="#c9c9c9"/><rect x="0" y="6" width="2" height="1" fill="#4a4a4a" opacity=".5"/><rect x="4" y="0" width="2" height="2" fill="#c9c9c9"/><rect x="4" y="2" width="2" height="1" fill="#4a4a4a" opacity=".5"/><rect x="4" y="4" width="2" height="2" fill="#c9c9c9"/><rect x="4" y="6" width="2" height="1" fill="#4a4a4a" opacity=".5"/><rect x="8" y="0" width="2" height="2" fill="#c9c9c9"/><rect x="8" y="2" width="2" height="1" fill="#4a4a4a" opacity=".5"/><rect x="8" y="4" width="2" height="2" fill="#c9c9c9"/><rect x="8" y="6" width="2" height="1" fill="#4a4a4a" opacity=".5"/><rect x="12" y="0" width="2" height="2" fill="#c9c9c9"/><rect x="12" y="2" width="2" height="1" fill="#4a4a4a" opacity=".5"/><rect x="12" y="4" width="2" height="2" fill="#c9c9c9"/><rect x="12" y="6" width="2" height="1" fill="#4a4a4a" opacity=".5"/></svg>
<span class="t" style="left:1640.5px;top:812.13px;font-size:13.2px;line-height:13.2px;color:#000;">Surface:</span>
<div class="a menu" style="left:1727px;top:804px;width:161px;height:25px;border-radius:5px;"></div>
<span class="t" style="left:1736px;top:811.93px;font-size:13.2px;line-height:13.2px;color:#fff;">PBR.001</span>
<svg class="a" style="left:1870px;top:812px;" width="8" height="8" viewBox="0 0 8 8"><circle cx="4" cy="4" r="2.4" fill="#8a8a8a" stroke="#1a1a1a" stroke-width="1.1"/></svg>
<svg class="a" style="left:1629px;top:852.8px;" width="14" height="14" viewBox="0 0 14 14"><circle cx="7" cy="7" r="4.6" fill="#e6e6e6" stroke="#1a1a1a" stroke-width="1.3"/><path d="M4.2 7 H9.8" stroke="#1a1a1a" stroke-width="1.6"/><path d="M7 4.2 V9.8" stroke="#1a1a1a" stroke-width="1.6"/></svg>
<span class="t" style="left:1652.5px;top:856.23px;font-size:13.2px;line-height:13.2px;color:#000;">is Metallic</span>
<div class="a menu" style="left:1727px;top:848px;width:161px;height:25px;border-radius:5px;"></div>
<span class="t" style="left:1736px;top:855.93px;font-size:13.2px;line-height:13.2px;color:#fff;">Separate RGB</span>
<svg class="a" style="left:1870px;top:856px;" width="8" height="8" viewBox="0 0 8 8"><circle cx="4" cy="4" r="2.4" fill="#8a8a8a" stroke="#1a1a1a" stroke-width="1.1"/></svg>
<svg class="a" style="left:1629px;top:883.8px;" width="14" height="14" viewBox="0 0 14 14"><circle cx="7" cy="7" r="4.6" fill="#e6e6e6" stroke="#1a1a1a" stroke-width="1.3"/><path d="M4.2 7 H9.8" stroke="#1a1a1a" stroke-width="1.6"/><path d="M7 4.2 V9.8" stroke="#1a1a1a" stroke-width="1.6"/></svg>
<span class="t" style="left:1652.5px;top:887.23px;font-size:13.2px;line-height:13.2px;color:#000;">Color - Ma</span>
<div class="a menub" style="left:1727px;top:879px;width:161px;height:25px;border-radius:5px;"></div>
<span class="t" style="left:1736px;top:886.93px;font-size:13.2px;line-height:13.2px;color:#fff;">Image Texture</span>
<svg class="a" style="left:1870px;top:887px;" width="8" height="8" viewBox="0 0 8 8"><circle cx="4" cy="4" r="2.4" fill="#8a8a8a" stroke="#1a1a1a" stroke-width="1.1"/></svg>
<svg class="a" style="left:1629px;top:914.8px;" width="14" height="14" viewBox="0 0 14 14"><circle cx="7" cy="7" r="4.6" fill="#e6e6e6" stroke="#1a1a1a" stroke-width="1.3"/><path d="M4.2 7 H9.8" stroke="#1a1a1a" stroke-width="1.6"/><path d="M7 4.2 V9.8" stroke="#1a1a1a" stroke-width="1.6"/></svg>
<span class="t" style="left:1652.5px;top:918.23px;font-size:13.2px;line-height:13.2px;color:#000;">Color - Ab</span>
<div class="a menu" style="left:1727px;top:910px;width:161px;height:25px;border-radius:5px;"></div>
<span class="t" style="left:1736px;top:917.93px;font-size:13.2px;line-height:13.2px;color:#fff;">Separate RGB</span>
<svg class="a" style="left:1870px;top:918px;" width="8" height="8" viewBox="0 0 8 8"><circle cx="4" cy="4" r="2.4" fill="#8a8a8a" stroke="#1a1a1a" stroke-width="1.1"/></svg>
<svg class="a" style="left:1629px;top:945.8px;" width="14" height="14" viewBox="0 0 14 14"><circle cx="7" cy="7" r="4.6" fill="#e6e6e6" stroke="#1a1a1a" stroke-width="1.3"/><path d="M4.2 7 H9.8" stroke="#1a1a1a" stroke-width="1.6"/><path d="M7 4.2 V9.8" stroke="#1a1a1a" stroke-width="1.6"/></svg>
<span class="t" style="left:1652.5px;top:949.23px;font-size:13.2px;line-height:13.2px;color:#000;">Alpha:</span>
<div class="a menu" style="left:1727px;top:941px;width:161px;height:25px;border-radius:5px;"></div>
<span class="t" style="left:1736px;top:948.93px;font-size:13.2px;line-height:13.2px;color:#fff;">Image Texture</span>
<svg class="a" style="left:1870px;top:949px;" width="8" height="8" viewBox="0 0 8 8"><circle cx="4" cy="4" r="2.4" fill="#8a8a8a" stroke="#1a1a1a" stroke-width="1.1"/></svg>
<span class="t" style="left:1652.5px;top:980.23px;font-size:13.2px;line-height:13.2px;color:#000;">Transluce</span>
<div class="a num" style="left:1727px;top:972px;width:136px;height:25px;border-radius:12px 0 0 12px;background:linear-gradient(#b0b0b0,#c4c4c4);"></div>
<div class="a " style="left:1728px;top:973px;width:12px;height:23px;border-radius:11px 0 0 11px;background:linear-gradient(#7a7a7a,#868686);"></div>
<span class="t" style="left:1442.5px;width:400px;text-align:right;top:979.93px;font-size:13.2px;line-height:13.2px;color:#000;">0.000</span>
<div class="a menu" style="left:1862px;top:972px;width:26px;height:25px;border-radius:0 5px 5px 0;"></div>
<svg class="a" style="left:1870px;top:980px;" width="8" height="8" viewBox="0 0 8 8"><circle cx="4" cy="4" r="2.4" fill="#8a8a8a" stroke="#1a1a1a" stroke-width="1.1"/></svg>
<span class="t" style="left:1652.5px;top:1011.23px;font-size:13.2px;line-height:13.2px;color:#000;">Abs Stren</span>
<div class="a num" style="left:1727px;top:1003px;width:136px;height:25px;border-radius:12px 0 0 12px;background:linear-gradient(#b0b0b0,#c4c4c4);"></div>
<svg class="a" style="left:1733.5px;top:1011.5px;" width="5" height="8" viewBox="0 0 5 8"><path d="M5 0 L5 8 L0 4Z" fill="#7c7c7c"/></svg>
<svg class="a" style="left:1850px;top:1011.5px;" width="5" height="8" viewBox="0 0 5 8"><path d="M0 0 L0 8 L5 4Z" fill="#7c7c7c"/></svg>
<span class="t" style="left:1442.5px;width:400px;text-align:right;top:1010.93px;font-size:13.2px;line-height:13.2px;color:#000;">0.000</span>
<div class="a menu" style="left:1862px;top:1003px;width:26px;height:25px;border-radius:0 5px 5px 0;"></div>
<svg class="a" style="left:1870px;top:1011px;" width="8" height="8" viewBox="0 0 8 8"><circle cx="4" cy="4" r="2.4" fill="#8a8a8a" stroke="#1a1a1a" stroke-width="1.1"/></svg>
<div class="a num" style="left:1727px;top:1034px;width:136px;height:25px;border-radius:12px 0 0 12px;background:linear-gradient(#b0b0b0,#c4c4c4);"></div>
<svg class="a" style="left:1733.5px;top:1042.5px;" width="5" height="8" viewBox="0 0 5 8"><path d="M5 0 L5 8 L0 4Z" fill="#7c7c7c"/></svg>
<svg class="a" style="left:1850px;top:1042.5px;" width="5" height="8" viewBox="0 0 5 8"><path d="M0 0 L0 8 L5 4Z" fill="#7c7c7c"/></svg>
<div class="a menu" style="left:1862px;top:1034px;width:26px;height:25px;border-radius:0 5px 5px 0;"></div>
<svg class="a" style="left:1870px;top:1042px;" width="8" height="8" viewBox="0 0 8 8"><circle cx="4" cy="4" r="2.4" fill="#8a8a8a" stroke="#1a1a1a" stroke-width="1.1"/></svg>
<svg class="a" style="left:1621px;top:1025px;" width="14" height="14" viewBox="0 0 12 12"><path d="M-1 3 L9 13 M-1 7 L5 13 M-1 -1 L13 13" stroke="#1c1c1c" stroke-width="1.1"/><path d="M-1 4.2 L7.8 13 M-1 .2 L11.8 13 M-1 8.2 L3.8 13" stroke="#979797" stroke-width=".9"/></svg>
<div class="a " style="left:0px;top:1008px;width:1621px;height:31px;background:#727272;border-top:1px solid #8a8a8a;"></div>
<div class="a " style="left:0px;top:1008px;width:204px;height:1px;background:#2b2b2b;"></div>
<div class="a " style="left:1396px;top:1007px;width:225px;height:1px;background:#5e5e5e;"></div>
<div class="a menu" style="left:11px;top:1013px;width:41px;height:24px;border-radius:5px;"></div>
<svg class="a" style="left:15.5px;top:1015px;" width="22" height="20" viewBox="0 0 22 20"><path d="M3 4.5 L12 2 L19 4 L19 15 L10.5 19 L3 15.5Z" fill="#ececec" stroke="#222" stroke-width="1.1" stroke-linejoin="round"/><path d="M3 4.5 L10.5 7 L10.5 19 L3 15.5Z" fill="#bdbdbd"/><path d="M10.5 7 L19 4 L19 15 L10.5 19Z" fill="#8f8f8f"/><path d="M3 4.5 L10.5 7 L19 4 M10.5 7 V19" stroke="#222" stroke-width=".9" fill="none"/></svg>
<svg class="a" style="left:39px;top:1017px;" width="8" height="16" viewBox="0 0 8 16"><path d="M4 .6 L7.7 6.8 L.3 6.8Z M4 15.4 L7.7 9.2 L.3 9.2Z" fill="#c2c2c2"/></svg>
<span class="t" style="left:66px;top:1020.43px;font-size:13.2px;line-height:13.2px;color:#000;">View</span>
<span class="t" style="left:122px;top:1020.43px;font-size:13.2px;line-height:13.2px;color:#000;">Select</span>
<span class="t" style="left:186px;top:1020.43px;font-size:13.2px;line-height:13.2px;color:#000;">Add</span>
<span class="t" style="left:236px;top:1020.43px;font-size:13.2px;line-height:13.2px;color:#000;">Object</span>
<div class="a menu" style="left:294px;top:1013px;width:144px;height:24px;border-radius:5px;"></div>
<svg class="a" style="left:301px;top:1016px;opacity:1.0" width="18" height="18" viewBox="0 0 18 18"><path d="M9 1 L16.5 4.5 L16.5 13 L9 17 L1.5 13 L1.5 4.5Z" fill="#dc862a" stroke="#5a3410" stroke-width="1.4" stroke-linejoin="round"/><path d="M9 1.6 L15.9 4.8 L9 8.2 L2.1 4.8Z" fill="#fde2b4"/><path d="M9 8.2 L9 16.4 L2.1 12.7 L2.1 4.8Z" fill="#f8c274"/><path d="M2.3 5 L9 8.3 L15.7 5 M9 8.3 V16.2" stroke="#fff" stroke-width=".9" fill="none" opacity=".85"/></svg>
<span class="t" style="left:324.5px;top:1020.43px;font-size:13.2px;line-height:13.2px;color:#fff;">Object Mode</span>
<svg class="a" style="left:426px;top:1017px;" width="8" height="16" viewBox="0 0 8 16"><path d="M4 .6 L7.7 6.8 L.3 6.8Z M4 15.4 L7.7 9.2 L.3 9.2Z" fill="#c2c2c2"/></svg>
<div class="a menu" style="left:445px;top:1013px;width:39px;height:24px;border-radius:5px;"></div>
<svg class="a" style="left:449px;top:1016px;" width="18" height="18" viewBox="0 0 18 18"><circle cx="9" cy="9" r="7.5" fill="#e6e6e6" stroke="#1a1a1a" stroke-width="1"/><circle cx="7.3" cy="7" r="3.6" fill="#fff"/></svg>
<svg class="a" style="left:472px;top:1017px;" width="8" height="16" viewBox="0 0 8 16"><path d="M4 .6 L7.7 6.8 L.3 6.8Z M4 15.4 L7.7 9.2 L.3 9.2Z" fill="#c2c2c2"/></svg>
<div class="a menu" style="left:490px;top:1013px;width:40px;height:24px;border-radius:5px 0 0 5px;"></div>
<svg class="a" style="left:494px;top:1015px;" width="22" height="20" viewBox="0 0 22 20"><circle cx="8" cy="7.5" r="5.2" fill="#e8e8e8" stroke="#222" stroke-width="1"/><circle cx="14" cy="13" r="5.2" fill="#e8e8e8" stroke="#222" stroke-width="1"/><rect x="8.5" y="8" width="5" height="5" fill="#7fb0f0" stroke="#1a3a7a" stroke-width="1.1"/></svg>
<svg class="a" style="left:518px;top:1017px;" width="8" height="16" viewBox="0 0 8 16"><path d="M4 .6 L7.7 6.8 L.3 6.8Z M4 15.4 L7.7 9.2 L.3 9.2Z" fill="#c2c2c2"/></svg>
<div class="a tool" style="left:529px;top:1013px;width:26px;height:24px;border-radius:0 5px 5px 0;background:linear-gradient(#a5a5a5,#979797);"></div>
<svg class="a" style="left:532px;top:1015px;" width="20" height="20" viewBox="0 0 20 20"><circle cx="4" cy="4.5" r="1.7" fill="none" stroke="#3a6ac0" stroke-width="1.1"/><circle cx="10" cy="4.5" r="1.7" fill="none" stroke="#3a6ac0" stroke-width="1.1"/><circle cx="16" cy="4.5" r="1.7" fill="none" stroke="#3a6ac0" stroke-width="1.1"/><path d="M2 13 L6.5 9 V11.5 H13.5 V9 L18 13 L13.5 17 V14.5 H6.5 V17Z" fill="#f4f4f4" stroke="#222" stroke-width="1"/></svg>
<div class="a menu" style="left:562px;top:1013px;width:24px;height:24px;border-radius:5px 0 0 5px;"></div>
<svg class="a" style="left:564px;top:1015px;" width="20" height="20" viewBox="0 0 20 20"><path d="M10 12 V2" stroke="#5a8ae8" stroke-width="2.6"/><path d="M10 12 L2.5 17" stroke="#e84a3a" stroke-width="2.6"/><path d="M10 12 L17.5 17" stroke="#5ac83a" stroke-width="2.6"/><circle cx="10" cy="12" r="1.8" fill="#f0d020"/></svg>
<div class="a sel" style="left:585px;top:1013px;width:27px;height:24px;border-radius:0;"></div>
<svg class="a" style="left:588.5px;top:1015px;" width="20" height="20" viewBox="0 0 20 20"><path d="M2.5 17.5 L13 7" stroke="#1a2a4a" stroke-width="4"/><path d="M2.5 17.5 L13 7" stroke="#9cc0f4" stroke-width="2"/><path d="M8.5 3.5 L17.5 2.5 L16.5 11.5Z" fill="#9cc0f4" stroke="#1a2a4a" stroke-width="1.1" stroke-linejoin="round"/></svg>
<div class="a menu" style="left:611px;top:1013px;width:25px;height:24px;border-radius:0;"></div>
<svg class="a" style="left:613px;top:1015px;" width="20" height="20" viewBox="0 0 20 20"><path d="M3 17 Q3 5 16 4" stroke="#6a8ab8" stroke-width="2.8" fill="none" stroke-linecap="round"/></svg>
<div class="a menu" style="left:635px;top:1013px;width:25px;height:24px;border-radius:0;"></div>
<svg class="a" style="left:638px;top:1015px;" width="20" height="20" viewBox="0 0 20 20"><path d="M2.5 17.5 L11 9" stroke="#5a7cb0" stroke-width="2.6"/><rect x="9" y="3" width="8.5" height="7.5" fill="#5a7cb0"/></svg>
<div class="a menu" style="left:659px;top:1013px;width:92px;height:24px;border-radius:0 5px 5px 0;"></div>
<span class="t" style="left:669.5px;top:1020.43px;font-size:13.2px;line-height:13.2px;color:#fff;">Global</span>
<svg class="a" style="left:739px;top:1017px;" width="8" height="16" viewBox="0 0 8 16"><path d="M4 .6 L7.7 6.8 L.3 6.8Z M4 15.4 L7.7 9.2 L.3 9.2Z" fill="#c2c2c2"/></svg>
<div class="a tool" style="left:757px;top:1013px;width:60px;height:23px;border-radius:5px;background:#8e8e8e;border-color:#3a3a3a;"></div>
<div class="a " style="left:769px;top:1014px;width:1px;height:21px;background:#4d4d4d;"></div>
<div class="a " style="left:781px;top:1014px;width:1px;height:21px;background:#4d4d4d;"></div>
<div class="a " style="left:793px;top:1014px;width:1px;height:21px;background:#4d4d4d;"></div>
<div class="a " style="left:804px;top:1014px;width:1px;height:21px;background:#4d4d4d;"></div>
<div class="a " style="left:758px;top:1024px;width:58px;height:1px;background:#4d4d4d;"></div>
<div class="a " style="left:760px;top:1016px;width:7px;height:6px;background:#f0a050;border:1px solid #6a3a10;border-radius:3px;"></div>
<div class="a tool" style="left:823px;top:1013px;width:60px;height:23px;border-radius:5px;background:#8e8e8e;border-color:#3a3a3a;"></div>
<div class="a " style="left:835px;top:1014px;width:1px;height:21px;background:#4d4d4d;"></div>
<div class="a " style="left:847px;top:1014px;width:1px;height:21px;background:#4d4d4d;"></div>
<div class="a " style="left:859px;top:1014px;width:1px;height:21px;background:#4d4d4d;"></div>
<div class="a " style="left:870px;top:1014px;width:1px;height:21px;background:#4d4d4d;"></div>
<div class="a " style="left:824px;top:1024px;width:58px;height:1px;background:#4d4d4d;"></div>
<div class="a tool" style="left:889px;top:1013px;width:25px;height:24px;border-radius:5px;background:linear-gradient(#7a7a7a,#6c6c6c);"></div>
<svg class="a" style="left:892px;top:1015px;" width="20" height="20" viewBox="0 0 20 20"><rect x="2" y="3" width="12" height="12.5" fill="#b8b8b8" stroke="#222" stroke-width="1"/><rect x="12" y="7" width="5.5" height="6" rx="2.5" fill="none" stroke="#222" stroke-width="3"/><rect x="12" y="7" width="5.5" height="6" rx="2.5" fill="none" stroke="#eee" stroke-width="1.4"/><rect x="12" y="11.5" width="5.5" height="6" rx="2.5" fill="none" stroke="#222" stroke-width="3"/><rect x="12" y="11.5" width="5.5" height="6" rx="2.5" fill="none" stroke="#eee" stroke-width="1.4"/></svg>
<div class="a tool" style="left:920px;top:1013px;width:25px;height:24px;border-radius:5px;background:linear-gradient(#a0a0a0,#949494);"></div>
<svg class="a" style="left:922.5px;top:1015px;" width="20" height="20" viewBox="0 0 20 20"><circle cx="10" cy="10" r="6.8" fill="none" stroke="#7c7c7c" stroke-width="1.6"/><circle cx="10" cy="10" r="3" fill="none" stroke="#7c7c7c" stroke-width="1.6"/></svg>
<div class="a tool" style="left:951px;top:1013px;width:25px;height:24px;border-radius:5px 0 0 5px;background:linear-gradient(#a0a0a0,#949494);"></div>
<svg class="a" style="left:953.5px;top:1015px;" width="20" height="20" viewBox="0 0 20 20"><path d="M4 15 L10.5 7.5 Q13.5 4.5 16 7 Q18.5 9.5 15.5 12.5 L9 17.5" fill="none" stroke="#666" stroke-width="3.6"/><path d="M4 15 L10.5 7.5 Q13.5 4.5 16 7 Q18.5 9.5 15.5 12.5 L9 17.5" fill="none" stroke="#9a9a9a" stroke-width="1.4"/></svg>
<div class="a menu" style="left:975px;top:1013px;width:41px;height:24px;border-radius:0;"></div>
<svg class="a" style="left:979px;top:1015px;" width="22" height="20" viewBox="0 0 22 20"><path d="M1 10 H20" stroke="#8fc0ff" stroke-width="1.6"/><path d="M3 5.5 V14.5 M17 5.5 V14.5" stroke="#eee" stroke-width="1.5"/><path d="M7 4 V16 M13 4 V16" stroke="#eee" stroke-width="1.5"/><path d="M10 2.5 V17.5" stroke="#8fc0ff" stroke-width="2.2"/></svg>
<svg class="a" style="left:1003.5px;top:1017px;" width="8" height="16" viewBox="0 0 8 16"><path d="M4 .6 L7.7 6.8 L.3 6.8Z M4 15.4 L7.7 9.2 L.3 9.2Z" fill="#c2c2c2"/></svg>
<div class="a tool" style="left:1015px;top:1013px;width:25px;height:24px;border-radius:0 5px 5px 0;background:linear-gradient(#a0a0a0,#949494);"></div>
<svg class="a" style="left:1017.5px;top:1015px;" width="20" height="20" viewBox="0 0 20 20"><path d="M9 3 V19 M14.5 3 V19 M3 9.5 H19 M3 15 H19" stroke="#333" stroke-width="1.4"/><circle cx="6.5" cy="5.5" r="4" fill="#7fb0f0" stroke="#fff" stroke-width="1.4"/><circle cx="6.5" cy="5.5" r="1.3" fill="#fff"/></svg>
<div class="a tool" style="left:1047px;top:1013px;width:25px;height:24px;border-radius:5px 0 0 5px;"></div>
<div class="a tool" style="left:1071px;top:1013px;width:26px;height:24px;border-radius:0 5px 5px 0;"></div>
<svg class="a" style="left:1050px;top:1015px;" width="20" height="19" viewBox="0 0 20 19"><rect x="1.5" y="5.5" width="16" height="11.5" rx="1.5" fill="#5a5a5a" stroke="#1c1c1c" stroke-width="1.1"/><rect x="3.5" y="3" width="5" height="3" fill="#8a8a8a" stroke="#1c1c1c" stroke-width=".9"/><rect x="2.5" y="7" width="14" height="2" fill="#d0d0d0"/><circle cx="10" cy="11.8" r="4.2" fill="#d8d8d8" stroke="#1c1c1c" stroke-width="1"/><circle cx="10" cy="11.8" r="2.4" fill="#8c4a4a" stroke="#332" stroke-width=".7"/><circle cx="9.2" cy="11" r=".9" fill="#fff"/><path d="M15.5 0 L16.6 3 L19.8 3.6 L16.8 4.8 L15.6 8 L14.6 4.8 L11.4 3.7 L14.5 3Z" fill="#ffe94a" stroke="#b89a10" stroke-width=".4"/></svg>
<svg class="a" style="left:1074.5px;top:1015px;" width="20" height="20" viewBox="0 0 20 20"><rect x="2" y="8" width="16" height="10" fill="#3a3a3a" stroke="#111" stroke-width="1"/><path d="M2 8 L17 2.5 L18 5.5 L3 11Z" fill="#e8e8e8" stroke="#111" stroke-width="1"/><path d="M5.5 6.7 L7.5 9.4 M9.5 5.2 L11.5 7.9 M13.5 3.8 L15.5 6.5" stroke="#111" stroke-width="1.6"/><path d="M4 11.5 H16 M4 14.5 H16" stroke="#ddd" stroke-width="1.2"/></svg>
<svg class="a" style="left:0px;top:1025px;" width="14" height="14" viewBox="0 0 12 12"><path d="M-1 3 L9 13 M-1 7 L5 13 M-1 -1 L13 13" stroke="#1c1c1c" stroke-width="1.1"/><path d="M-1 4.2 L7.8 13 M-1 .2 L11.8 13 M-1 8.2 L3.8 13" stroke="#979797" stroke-width=".9"/></svg>
<div class="a " style="left:1620px;top:56px;width:1px;height:983px;background:#050505;"></div>
<div class="a " style="left:0px;top:23px;width:1920px;height:33px;background:#727272;border-bottom:1px solid #0c0c0c;border-top:1px solid #8a8a8a"></div>
<div class="a menu" style="left:10px;top:28px;width:41px;height:25px;border-radius:5px;"></div>
<svg class="a" style="left:16px;top:31.5px;" width="18" height="18" viewBox="0 0 18 18"><defs><linearGradient id="ig" x1="0" x2="0" y1="0" y2="1"><stop offset="0" stop-color="#6d8cc6"/><stop offset="1" stop-color="#2c4c8c"/></linearGradient></defs><circle cx="9" cy="9" r="7.8" fill="url(#ig)" stroke="#dfe8f6" stroke-width="1.4"/><circle cx="9" cy="9" r="8.6" fill="none" stroke="#1f2f4a" stroke-width=".8"/><rect x="8" y="7.6" width="2.4" height="6" fill="#fff"/><rect x="7" y="7.6" width="2" height="1.4" fill="#fff"/><rect x="6.8" y="12.6" width="4.8" height="1.4" fill="#fff"/><circle cx="9.1" cy="4.7" r="1.5" fill="#fff"/></svg>
<svg class="a" style="left:37.5px;top:32.3px;" width="8" height="16" viewBox="0 0 8 16"><path d="M4 .6 L7.7 6.8 L.3 6.8Z M4 15.4 L7.7 9.2 L.3 9.2Z" fill="#c2c2c2"/></svg>
<span class="t" style="left:65.5px;top:35.93px;font-size:13.2px;line-height:13.2px;color:#000;">File</span>
<span class="t" style="left:111px;top:35.93px;font-size:13.2px;line-height:13.2px;color:#000;">Render</span>
<span class="t" style="left:182.5px;top:35.93px;font-size:13.2px;line-height:13.2px;color:#000;">Window</span>
<span class="t" style="left:258.5px;top:35.93px;font-size:13.2px;line-height:13.2px;color:#000;">Help</span>
<div class="a menu" style="left:303px;top:28px;width:41px;height:25px;border-radius:5px 0 0 5px;"></div>
<svg class="a" style="left:309px;top:31.5px;" width="18" height="18" viewBox="0 0 18 18"><rect x="1.5" y="1.5" width="15.5" height="15.5" rx="1" fill="#2a2a2a"/><rect x="2.5" y="2.5" width="6" height="6.5" fill="#f4f4f4"/><rect x="2.5" y="10" width="6" height="6" fill="#ececec"/><rect x="9.5" y="2.5" width="6.5" height="13.5" fill="#d4d4d4"/><rect x="3.5" y="14" width="4" height="1" fill="#555"/><rect x="10.5" y="14" width="4.5" height="1" fill="#555"/></svg>
<svg class="a" style="left:330.5px;top:32.3px;" width="8" height="16" viewBox="0 0 8 16"><path d="M4 .6 L7.7 6.8 L.3 6.8Z M4 15.4 L7.7 9.2 L.3 9.2Z" fill="#c2c2c2"/></svg>
<div class="a txt" style="left:342px;top:28px;width:152px;height:25px;border-radius:0;"></div>
<span class="t" style="left:352.5px;top:35.93px;font-size:13.2px;line-height:13.2px;color:#000;">Default</span>
<div class="a tool" style="left:492px;top:28px;width:26px;height:25px;border-radius:0;"></div>
<div class="a tool" style="left:516px;top:28px;width:27px;height:25px;border-radius:0 5px 5px 0;"></div>
<svg class="a" style="left:496.5px;top:31px;" width="18" height="18" viewBox="0 0 18 18"><path d="M9 3.2 V14.8 M3.2 9 H14.8" stroke="#2e2e2e" stroke-width="4.8" stroke-linecap="round"/><path d="M9 3.6 V14.4 M3.6 9 H14.4" stroke="#f4f4f4" stroke-width="2.7" stroke-linecap="round"/></svg>
<svg class="a" style="left:521px;top:31px;" width="18" height="18" viewBox="0 0 18 18"><path d="M4.3 4.3 L13.7 13.7 M13.7 4.3 L4.3 13.7" stroke="#2e2e2e" stroke-width="4.8" stroke-linecap="round"/><path d="M4.7 4.7 L13.3 13.3 M13.3 4.7 L4.7 13.3" stroke="#f4f4f4" stroke-width="2.7" stroke-linecap="round"/></svg>
<div class="a menu" style="left:549px;top:28px;width:41px;height:25px;border-radius:5px 0 0 5px;"></div>
<svg class="a" style="left:555px;top:31px;" width="18" height="18" viewBox="0 0 18 18"><g transform="scale(1)"><circle cx="4" cy="4" r="3.6" fill="#e9e27a" opacity=".35"/><circle cx="4" cy="4" r="1.9" fill="#f2ec7a"/><rect x="9" y="2" width="7" height="11" rx="3.2" fill="#4f86d8" stroke="#1d3a6a" stroke-width=".8"/><rect x="10.2" y="3" width="2" height="9" rx="1" fill="#a9c8f4"/><circle cx="6.5" cy="12.5" r="4.3" fill="#e8e8e8" stroke="#333" stroke-width=".9"/><circle cx="5.3" cy="11.2" r="1.6" fill="#fff"/></g></svg>
<svg class="a" style="left:577px;top:32.3px;" width="8" height="16" viewBox="0 0 8 16"><path d="M4 .6 L7.7 6.8 L.3 6.8Z M4 15.4 L7.7 9.2 L.3 9.2Z" fill="#c2c2c2"/></svg>
<div class="a txt" style="left:589px;top:28px;width:150px;height:25px;border-radius:0;"></div>
<span class="t" style="left:599px;top:35.93px;font-size:13.2px;line-height:13.2px;color:#000;">Scene</span>
<div class="a tool" style="left:738px;top:28px;width:25px;height:25px;border-radius:0;"></div>
<div class="a tool" style="left:762px;top:28px;width:26px;height:25px;border-radius:0 5px 5px 0;"></div>
<svg class="a" style="left:742px;top:31px;" width="18" height="18" viewBox="0 0 18 18"><path d="M9 3.2 V14.8 M3.2 9 H14.8" stroke="#2e2e2e" stroke-width="4.8" stroke-linecap="round"/><path d="M9 3.6 V14.4 M3.6 9 H14.4" stroke="#f4f4f4" stroke-width="2.7" stroke-linecap="round"/></svg>
<svg class="a" style="left:766.5px;top:31px;" width="18" height="18" viewBox="0 0 18 18"><path d="M4.3 4.3 L13.7 13.7 M13.7 4.3 L4.3 13.7" stroke="#2e2e2e" stroke-width="4.8" stroke-linecap="round"/><path d="M4.7 4.7 L13.3 13.3 M13.3 4.7 L4.7 13.3" stroke="#f4f4f4" stroke-width="2.7" stroke-linecap="round"/></svg>
<div class="a menu" style="left:808px;top:28px;width:142px;height:25px;border-radius:5px;"></div>
<span class="t" style="left:818px;top:35.93px;font-size:13.2px;line-height:13.2px;color:#fff;">Cycles Render</span>
<svg class="a" style="left:938px;top:32.3px;" width="8" height="16" viewBox="0 0 8 16"><path d="M4 .6 L7.7 6.8 L.3 6.8Z M4 15.4 L7.7 9.2 L.3 9.2Z" fill="#c2c2c2"/></svg>
<svg class="a" style="left:971px;top:30.5px;" width="20.16" height="18.48" viewBox="0 0 20.16 18.48"><g transform="scale(1.12)"><g stroke="#ea7600" stroke-linecap="round" fill="none"><path d="M11 4.8 L7.4 1.8" stroke-width="2.3"/><path d="M9.5 6.1 H2.9" stroke-width="2.3"/><path d="M7.2 9.6 L1.9 13.3" stroke-width="2.5"/></g><circle cx="11.6" cy="10" r="5.7" fill="#ea7600"/><circle cx="11.8" cy="10" r="3.4" fill="#fff"/><circle cx="11.8" cy="10" r="2" fill="#0d4f9e"/></g></svg>
<span class="t" style="left:1004.5px;top:36.43px;font-size:13.2px;line-height:13.2px;color:#000;">v2.79 | Verts:5,002 | Faces:4,992 | Tris:9,984 | Objects:1/1 | Lamps:0/0 | Mem:19.85M | table-desk-3</span>
<svg class="a" style="left:0px;top:41px;" width="14" height="14" viewBox="0 0 12 12"><path d="M-1 3 L9 13 M-1 7 L5 13 M-1 -1 L13 13" stroke="#1c1c1c" stroke-width="1.1"/><path d="M-1 4.2 L7.8 13 M-1 .2 L11.8 13 M-1 8.2 L3.8 13" stroke="#979797" stroke-width=".9"/></svg>
<svg class="a" style="left:1906px;top:24px;" width="14" height="14" viewBox="0 0 12 12"><path d="M3 -1 L13 9 M7 -1 L13 5 M-1 -1 L13 13" stroke="#1c1c1c" stroke-width="1.1"/><path d="M4.2 -1 L13 7.8 M.2 -1 L13 11.8 M8.2 -1 L13 3.8" stroke="#979797" stroke-width=".9"/></svg>
</body></html>
